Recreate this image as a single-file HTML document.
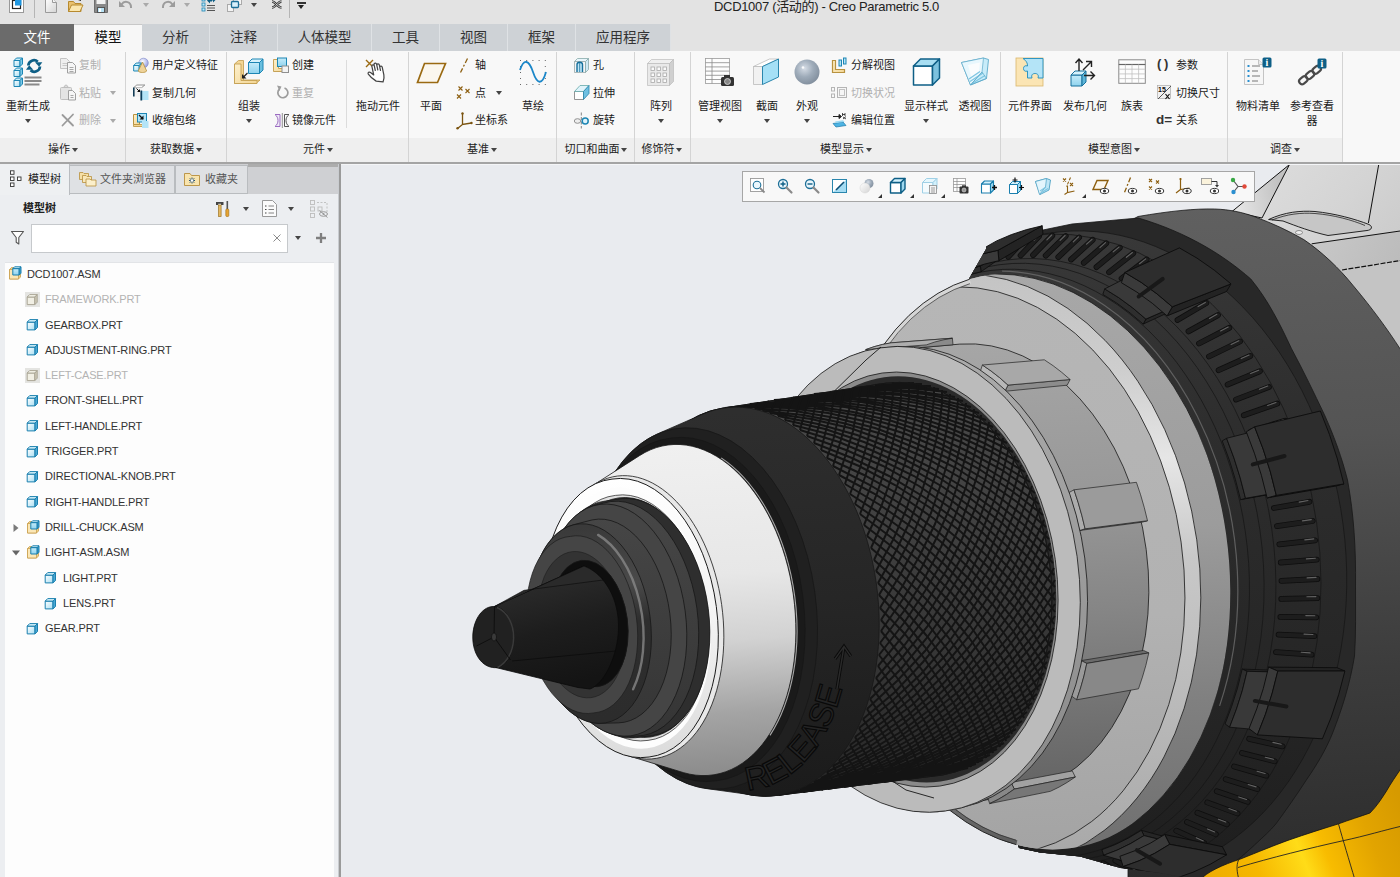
<!DOCTYPE html>
<html lang="zh-CN"><head><meta charset="utf-8"><title>DCD1007 - Creo Parametric 5.0</title>
<style>
*{box-sizing:border-box;margin:0;padding:0}
html,body{width:1400px;height:877px;overflow:hidden;background:#e3e3e3}
body{font-family:"Liberation Sans","Noto Sans CJK SC",sans-serif;font-size:11px;color:#1a1a1a;position:relative}
.abs{position:absolute}
.t{position:absolute;white-space:nowrap;line-height:16px;height:16px}
.tc{position:absolute;white-space:nowrap;line-height:16px;height:16px;transform:translateX(-50%)}
.dis{color:#b0b0b0}
.tab{position:absolute;top:24px;height:27px;background:#ced2d6;font-size:13.5px;line-height:27.5px;text-align:center;color:#333;border-right:1px solid #dfe2e5}
.gsep{position:absolute;top:52px;height:110px;width:1px;background:#d4d4d4}
.glab{position:absolute;top:141px;line-height:16px;white-space:nowrap;transform:translateX(-50%);color:#222}
.arr{position:absolute;width:0;height:0;border-left:3.5px solid transparent;border-right:3.5px solid transparent;border-top:4px solid #444}
.arrg{border-top-color:#aaa}
.ico{position:absolute}
.tr{position:absolute;white-space:nowrap;line-height:16px;height:16px;font-size:11px;color:#333;letter-spacing:-0.15px}
</style></head><body>
<svg width="0" height="0" style="position:absolute"><defs>
<linearGradient id="gb" x1="0" y1="0" x2="1" y2="1"><stop offset="0" stop-color="#ffffff"/><stop offset="1" stop-color="#a8def2"/></linearGradient>
<linearGradient id="gb2" x1="0" y1="0" x2="0" y2="1"><stop offset="0" stop-color="#c6ecfa"/><stop offset="1" stop-color="#8fd3ee"/></linearGradient>
<linearGradient id="gy" x1="0" y1="0" x2="1" y2="1"><stop offset="0" stop-color="#fdf0cc"/><stop offset="1" stop-color="#f3d695"/></linearGradient>
<linearGradient id="gg" x1="0" y1="0" x2="1" y2="1"><stop offset="0" stop-color="#ffffff"/><stop offset="1" stop-color="#d4d4d4"/></linearGradient>
<radialGradient id="gsph" cx="0.4" cy="0.35" r="0.7"><stop offset="0" stop-color="#d6dde6"/><stop offset="0.5" stop-color="#9eabb9"/><stop offset="1" stop-color="#7f8c9b"/></radialGradient>
<radialGradient id="gsph2" cx="0.4" cy="0.35" r="0.7"><stop offset="0" stop-color="#ffffff"/><stop offset="0.6" stop-color="#b9c0ee"/><stop offset="1" stop-color="#8d95d8"/></radialGradient>
</defs></svg>
<div class="abs" id="view" style="left:341px;top:164px;width:1059px;height:713px;background:#e9ebef;overflow:hidden;border-top:1px solid #f4f5f7"><svg class="abs" style="left:0;top:0" width="1059" height="712" viewBox="341 165 1059 712"><defs><linearGradient id="d1" gradientUnits="userSpaceOnUse" x1="1240" y1="165" x2="1400" y2="300"><stop offset="0" stop-color="#dedede"/><stop offset="0.5" stop-color="#d4d4d4"/><stop offset="1" stop-color="#c6c6c6"/></linearGradient><linearGradient id="d2" gradientUnits="userSpaceOnUse" x1="1235" y1="200" x2="1280" y2="190"><stop offset="0" stop-color="#e6e6e6"/><stop offset="1" stop-color="#c2c2c2"/></linearGradient><linearGradient id="d3" gradientUnits="userSpaceOnUse" x1="1300" y1="240" x2="1400" y2="300"><stop offset="0" stop-color="#c9c9c9"/><stop offset="1" stop-color="#b9b9b9"/></linearGradient><linearGradient id="d4" gradientUnits="userSpaceOnUse" x1="1113.8" y1="210.9" x2="1148.2" y2="880.6"><stop offset="0" stop-color="#606060"/><stop offset="0.35" stop-color="#545454"/><stop offset="0.7" stop-color="#3c3c3c"/><stop offset="1" stop-color="#2c2c2c"/></linearGradient><clipPath id="rc"><path d="M968 292L969.5 278L986 249L990 160L1400 160L1400 880L1200 880L1157 872.5L1120 868L1080 856.5L1040 852.5L1019 848L968 700Z"/></clipPath><linearGradient id="d5" gradientUnits="userSpaceOnUse" x1="1011.3" y1="240.8" x2="1045.8" y2="879.5"><stop offset="0" stop-color="#383838"/><stop offset="0.3" stop-color="#2e2e2e"/><stop offset="0.7" stop-color="#262626"/><stop offset="1" stop-color="#1e1e1e"/></linearGradient><clipPath id="cc"><ellipse cx="1030.8" cy="561.4" rx="289.6" ry="197.2" transform="rotate(-98.12 1030.8 561.4)"/></clipPath><linearGradient id="d6" gradientUnits="userSpaceOnUse" x1="979.3" y1="274.8" x2="1011.2" y2="855.6"><stop offset="0" stop-color="#a8a8a8"/><stop offset="0.45" stop-color="#9c9c9c"/><stop offset="0.75" stop-color="#808080"/><stop offset="1" stop-color="#707070"/></linearGradient><linearGradient id="d7" gradientUnits="userSpaceOnUse" x1="947.4" y1="275.3" x2="980.1" y2="863.8"><stop offset="0" stop-color="#c4c4c4"/><stop offset="0.18" stop-color="#cecece"/><stop offset="0.33" stop-color="#e6e6e6"/><stop offset="0.5" stop-color="#c8c8c8"/><stop offset="0.75" stop-color="#bababa"/><stop offset="1" stop-color="#a8a8a8"/></linearGradient><linearGradient id="d8" gradientUnits="userSpaceOnUse" x1="952.2" y1="290.2" x2="983.2" y2="848.2"><stop offset="0" stop-color="#b6b6b6"/><stop offset="0.6" stop-color="#b2b2b2"/><stop offset="1" stop-color="#a4a4a4"/></linearGradient><linearGradient id="d9" gradientUnits="userSpaceOnUse" x1="900" y1="280" x2="900" y2="850"><stop offset="0" stop-color="#d6d6d6"/><stop offset="0.55" stop-color="#cacaca"/><stop offset="0.8" stop-color="#9c9c9c"/><stop offset="0.92" stop-color="#6e6e6e"/><stop offset="1" stop-color="#5a5a5a"/></linearGradient><linearGradient id="d10" gradientUnits="userSpaceOnUse" x1="955.3" y1="345.9" x2="980.2" y2="793.9"><stop offset="0" stop-color="#a6a6a6"/><stop offset="0.35" stop-color="#989898"/><stop offset="0.6" stop-color="#868686"/><stop offset="1" stop-color="#646464"/></linearGradient><linearGradient id="d11" gradientUnits="userSpaceOnUse" x1="890.2" y1="346.6" x2="916.7" y2="810.8"><stop offset="0" stop-color="#ababab"/><stop offset="0.5" stop-color="#9c9c9c"/><stop offset="1" stop-color="#888"/></linearGradient><linearGradient id="d12" gradientUnits="userSpaceOnUse" x1="896" y1="382" x2="918.5" y2="775.1"><stop offset="0" stop-color="#4a4a4a"/><stop offset="0.35" stop-color="#414141"/><stop offset="0.7" stop-color="#363636"/><stop offset="1" stop-color="#282828"/></linearGradient><linearGradient id="d13" gradientUnits="userSpaceOnUse" x1="709.9" y1="413.1" x2="733.5" y2="795.5"><stop offset="0" stop-color="#2e2e2e"/><stop offset="0.5" stop-color="#262626"/><stop offset="1" stop-color="#1b1b1b"/></linearGradient><linearGradient id="d14" gradientUnits="userSpaceOnUse" x1="674" y1="444.4" x2="694.7" y2="775"><stop offset="0" stop-color="#f0f0f0"/><stop offset="0.4" stop-color="#e7e7e7"/><stop offset="0.6" stop-color="#d2d2d2"/><stop offset="0.82" stop-color="#a4a4a4"/><stop offset="1" stop-color="#8c8c8c"/></linearGradient><linearGradient id="d15" gradientUnits="userSpaceOnUse" x1="617.7" y1="478.7" x2="635.6" y2="757.1"><stop offset="0" stop-color="#ffffff"/><stop offset="0.5" stop-color="#f4f4f4"/><stop offset="1" stop-color="#dcdcdc"/></linearGradient><linearGradient id="d16" gradientUnits="userSpaceOnUse" x1="604.4" y1="504.1" x2="619.4" y2="736"><stop offset="0" stop-color="#474747"/><stop offset="0.5" stop-color="#3e3e3e"/><stop offset="1" stop-color="#353535"/></linearGradient><linearGradient id="d17" gradientUnits="userSpaceOnUse" x1="577.1" y1="528.1" x2="589.6" y2="720.2"><stop offset="0" stop-color="#3a3a3a"/><stop offset="0.3" stop-color="#4a4a4a"/><stop offset="0.5" stop-color="#2e2e2e"/><stop offset="1" stop-color="#2c2c2c"/></linearGradient><linearGradient id="d18" gradientUnits="userSpaceOnUse" x1="520" y1="590" x2="545" y2="690"><stop offset="0" stop-color="#2a2a2a"/><stop offset="0.45" stop-color="#1d1d1d"/><stop offset="1" stop-color="#141414"/></linearGradient><linearGradient id="d19" gradientUnits="userSpaceOnUse" x1="1205" y1="880" x2="1400" y2="800"><stop offset="0" stop-color="#eeac00"/><stop offset="0.25" stop-color="#f6b800"/><stop offset="0.47" stop-color="#ffdc18"/><stop offset="0.58" stop-color="#f8bc00"/><stop offset="0.8" stop-color="#e2a400"/><stop offset="1" stop-color="#d69a00"/></linearGradient></defs><path d="M1225 218L1289.5 165L1410 165L1410 420L1225 420Z" fill="url(#d1)"/><path d="M1232 211.5L1289.5 164.5L1262 218Z" fill="url(#d2)" stroke="#111" stroke-width="1"/><path d="M1311.7 243.8L1400 231L1400 420L1311 420Z" fill="url(#d3)"/><path d="M1342 270L1400 260.6L1400 420L1342 420Z" fill="#c4c4c4"/><path d="M1311.7 243.8L1400 231" fill="none" stroke="#111" stroke-width="1"/><path d="M1342 270L1400 260.6" fill="none" stroke="#111" stroke-width="1.2" stroke-dasharray="5 1.5"/><path d="M1378.8 164L1368.4 223" fill="none" stroke="#111" stroke-width="1"/><path d="M1268.6 219.5C1285 212 1300 210.5 1315 211.5C1335 213.5 1355 219 1369 224.5C1373 226.5 1372 230 1367 230.5L1328 235.5C1312 232 1296 226 1283 221Z" fill="#c6c6c6" stroke="#111" stroke-width="0.9"/><path d="M1272 220C1287 214 1301 212.5 1315 213.5C1334 215 1352 220 1365 225.5" fill="none" stroke="#111" stroke-width="0.7"/><path d="M1295.5 232.5a3.5 2 0 1 0 7 0a3.5 2 0 1 0 -7 0" fill="#ececec" stroke="#555" stroke-width="0.6"/><path d="M1128 222L1138 216.5C1170 211 1195 208.5 1214.5 209C1230 209.5 1243 212.5 1254 216.5C1272 223 1289 231 1303.8 239.6C1322 252 1339 268 1353.4 285.9C1372 308 1388 330 1400 348.7L1410 365L1410 890L1128 890Z" fill="url(#d4)" stroke="#161616" stroke-width="0.8"/><g clip-path="url(#rc)"><path d="M960 300L969.8 278L986.3 249.5L1026 233.5L1072 224L1138.4 218C1165 226 1185 235 1204.5 246C1222 256 1237 267 1250.8 279C1268 300 1280 324 1291.5 348.7C1304 372 1314 393 1324.5 414.9C1334 436 1342 458 1347.5 480C1354 515 1356 550 1355.5 586C1355.5 610 1356 634 1354.5 656C1350 684 1342 709 1333 732C1326 750 1316 766 1306 780.5C1296 796 1286 810 1276 823.8C1270 831 1263 837 1257 842.7C1247 852 1236 862 1222 872L1200 885L1150 885L1150 400Z" fill="#282828" stroke="#161616" stroke-width="0.8"/><path d="M1059.9 231.8A324.9 246.4 -98.3 0 1 1145.5 875.8L1118.1 879.8A325 243.7 -98.2 1 1 1032.6 235.4Z" fill="url(#d5)" stroke="#161616" stroke-width="0.8"/><path d="M890.7 325A325 243.7 -98.2 1 1 963.8 832.7L946.7 819.3A304.1 225.5 -98.2 0 1 878.1 342.2Z" fill="url(#d5)" stroke="#161616" stroke-width="0.8"/><path d="M930.1 290.3A304.1 225.5 -98.2 1 1 1011.7 854.6L1004.5 852.1A300.3 221.9 -98.1 0 1 923.9 294.6Z" fill="url(#d5)" stroke="#161616" stroke-width="0.8"/><path d="M923.9 294.6A300.3 221.9 -98.1 1 1 1004.5 852.1L995.6 849.2A295.8 217.7 -98.1 0 1 916.3 299.7Z" fill="url(#d5)" stroke="#161616" stroke-width="0.8"/><path d="M956.8 278.6A295.8 217.7 -98.1 1 1 1040.7 857.9L1026.1 857.1A293.1 214.2 -98.1 0 1 943.1 283.2Z" fill="url(#d5)" stroke="#161616" stroke-width="0.8"/><path d="M1002.1 271.2A295.2 216.2 -98.1 0 1 1219.6 705.9" fill="none" stroke="#6c6c6c" stroke-width="1.2" opacity="0.8"/><path d="M913.4 302L925.3 286.1M923.1 293.9L935.6 277.5M933.2 286.5L946.3 269.6M943.7 279.8L957.4 262.5M954.5 273.9L968.8 256.1M965.7 268.7L980.7 250.5M1008.3 256.8L1025.9 237.6M1020.6 255.5L1039 236.2M1033.1 255.1L1052.3 235.6M1045.7 255.6L1065.7 236.1M1058.3 257.1L1079.1 237.5M1071.1 259.5L1092.7 239.9M1083.8 262.8L1106.3 243.3M1096.5 267.1L1119.8 247.7M1109.1 272.3L1133.3 253.2M1121.6 278.5L1146.6 259.6M1177.5 320L1206.3 303.1M1188.5 331.4L1218 315.1M1199 343.5L1229.3 327.9M1209 356.5L1240 341.5M1218.6 370.2L1250.3 356M1227.6 384.6L1259.9 371.2M1236 399.6L1268.9 387.1M1243.8 415.2L1277.3 403.6M1251 431.4L1284.9 420.7M1273.9 508L1309.4 501.8M1277 526.1L1312.7 521M1279.3 544.3L1315.2 540.3M1280.8 562.5L1316.7 559.6M1281.5 580.8L1317.4 579M1281.3 598.9L1317.3 598.2M1280.4 616.9L1316.2 617.3M1278.6 634.7L1314.3 636.1M1276 652.2L1311.5 654.7M1249.2 738.8L1282.5 746.3M1242 753L1274.7 761.3M1234.1 766.5L1266.3 775.6M1225.7 779.2L1257.3 789M1216.8 791.2L1247.7 801.7M1207.3 802.4L1237.5 813.4M1197.4 812.7L1226.9 824.3M1187 822.1L1215.8 834.2M1176.3 830.7L1204.3 843.2M1115.4 860.5L1139.3 874.3M1103.2 863.3L1126.3 877.2M1090.9 865.2L1113.2 879.1M1078.5 866.2L1100 880.1M1066.2 866.3L1086.8 880.1M1053.8 865.5L1073.7 879.2M1041.5 863.8L1060.7 877.3M1029.3 861.3L1047.7 874.6M1017.3 857.9L1034.9 871" fill="none" stroke="#0e0e0e" stroke-width="5.8" stroke-linecap="round"/><path d="M913.4 302L925.3 286.1M923.1 293.9L935.6 277.5M933.2 286.5L946.3 269.6M943.7 279.8L957.4 262.5M954.5 273.9L968.8 256.1M965.7 268.7L980.7 250.5M1008.3 256.8L1025.9 237.6M1020.6 255.5L1039 236.2M1033.1 255.1L1052.3 235.6M1045.7 255.6L1065.7 236.1M1058.3 257.1L1079.1 237.5M1071.1 259.5L1092.7 239.9M1083.8 262.8L1106.3 243.3M1096.5 267.1L1119.8 247.7M1109.1 272.3L1133.3 253.2M1121.6 278.5L1146.6 259.6M1177.5 320L1206.3 303.1M1188.5 331.4L1218 315.1M1199 343.5L1229.3 327.9M1209 356.5L1240 341.5M1218.6 370.2L1250.3 356M1227.6 384.6L1259.9 371.2M1236 399.6L1268.9 387.1M1243.8 415.2L1277.3 403.6M1251 431.4L1284.9 420.7M1273.9 508L1309.4 501.8M1277 526.1L1312.7 521M1279.3 544.3L1315.2 540.3M1280.8 562.5L1316.7 559.6M1281.5 580.8L1317.4 579M1281.3 598.9L1317.3 598.2M1280.4 616.9L1316.2 617.3M1278.6 634.7L1314.3 636.1M1276 652.2L1311.5 654.7M1249.2 738.8L1282.5 746.3M1242 753L1274.7 761.3M1234.1 766.5L1266.3 775.6M1225.7 779.2L1257.3 789M1216.8 791.2L1247.7 801.7M1207.3 802.4L1237.5 813.4M1197.4 812.7L1226.9 824.3M1187 822.1L1215.8 834.2M1176.3 830.7L1204.3 843.2M1115.4 860.5L1139.3 874.3M1103.2 863.3L1126.3 877.2M1090.9 865.2L1113.2 879.1M1078.5 866.2L1100 880.1M1066.2 866.3L1086.8 880.1M1053.8 865.5L1073.7 879.2M1041.5 863.8L1060.7 877.3M1029.3 861.3L1047.7 874.6M1017.3 857.9L1034.9 871" fill="none" stroke="#1d1d1d" stroke-width="4.3" stroke-linecap="round"/><path d="M921.7 290.9L924.7 286.9M931.8 282.4L934.9 278.3M942.3 274.7L945.6 270.4M953.3 267.7L956.7 263.3M964.5 261.4L968.1 257M976.2 256L979.9 251.4M1020.6 243.4L1025 238.6M1033.5 242L1038.1 237.1M1046.5 241.5L1051.3 236.6M1059.7 241.9L1064.7 237.1M1072.9 243.4L1078.1 238.5M1086.2 245.8L1091.6 240.9M1099.5 249.2L1105.1 244.3M1112.8 253.5L1118.6 248.7M1126 258.9L1132 254.1M1139.1 265.3L1145.3 260.5M1197.7 308.2L1204.9 304M1209.1 320L1216.5 315.9M1220.2 332.6L1227.8 328.7M1230.7 346L1238.5 342.3M1240.8 360.2L1248.7 356.7M1250.2 375.2L1258.3 371.8M1259 390.8L1267.3 387.7M1267.2 407.1L1275.6 404.2M1274.7 424L1283.2 421.3M1298.8 503.7L1307.6 502.1M1302 522.5L1310.9 521.2M1304.4 541.5L1313.4 540.5M1306 560.5L1315 559.8M1306.7 579.5L1315.6 579M1306.5 598.4L1315.5 598.2M1305.4 617.2L1314.4 617.3M1303.6 635.7L1312.5 636.1M1300.8 653.9L1309.7 654.5M1272.5 744L1280.8 745.9M1264.9 758.8L1273.1 760.9M1256.7 772.8L1264.7 775.1M1247.8 786.1L1255.7 788.5M1238.4 798.5L1246.1 801.1M1228.5 810.1L1236 812.9M1218 820.8L1225.4 823.7M1207.1 830.6L1214.3 833.6M1195.9 839.4L1202.9 842.5M1132.1 870.1L1138.1 873.6M1119.4 873L1125.1 876.5M1106.5 874.9L1112 878.4M1093.6 875.9L1098.9 879.4M1080.6 875.9L1085.8 879.4M1067.8 875.1L1072.7 878.5M1054.9 873.3L1059.7 876.6M1042.2 870.6L1046.8 873.9M1029.6 867.1L1034 870.3" fill="none" stroke="#626262" stroke-width="1.1" stroke-linecap="round" transform="translate(0.4,-1.6)"/><path d="M981 271.8L998.5 259.4L998 254.6L980.4 266.1Z" fill="#262626" stroke="#0c0c0c" stroke-width="0.8" stroke-linejoin="round"/><path d="M943.2 284.1L955.5 279L968.1 274.9L981 271.8L980.4 266.1L967.3 269.3L954.4 273.5L942 278.8Z" fill="#2e2e2e" stroke="#0c0c0c" stroke-width="0.8" stroke-linejoin="round"/><path d="M942 278.8L954.4 273.5L967.3 269.3L980.4 266.1L998 254.6L984.3 258L971 262.4L958.1 267.9Z" fill="#393939" stroke="#0c0c0c" stroke-width="0.8" stroke-linejoin="round"/><path d="M998.9 260.7L1043 234.4L1042.2 225.8L997.9 250.3Z" fill="#232323" stroke="#0c0c0c" stroke-width="0.9" stroke-linejoin="round"/><path d="M957.9 273.9L971.2 268.4L984.9 264L998.9 260.7L997.9 250.3L983.4 253.7L969.3 258.3L955.6 264.2Z" fill="#3a3a3a" stroke="#0c0c0c" stroke-width="0.9" stroke-linejoin="round"/><path d="M955.6 264.2L969.3 258.3L983.4 253.7L997.9 250.3L1042.2 225.8L1026.6 229.6L1011.4 234.6L996.6 240.9Z" fill="#2d2d2d" stroke="#0c0c0c" stroke-width="0.9" stroke-linejoin="round"/><path d="M969.3 265.4L982.6 247.4" fill="none" stroke="#181818" stroke-width="4" stroke-linecap="round"/><path d="M1143.2 324.1L1167.7 312.8L1170.1 308.5L1145.9 319.1Z" fill="#262626" stroke="#0c0c0c" stroke-width="0.8" stroke-linejoin="round"/><path d="M1102.8 294.4L1116.6 303L1130.1 313L1143.2 324.1L1145.9 319.1L1132.6 307.8L1118.8 297.7L1104.7 288.9Z" fill="#2e2e2e" stroke="#0c0c0c" stroke-width="0.8" stroke-linejoin="round"/><path d="M1104.7 288.9L1118.8 297.7L1132.6 307.8L1145.9 319.1L1170.1 308.5L1156.2 296.9L1141.8 286.5L1127.1 277.5Z" fill="#393939" stroke="#0c0c0c" stroke-width="0.8" stroke-linejoin="round"/><path d="M1167.1 315.9L1226.5 291.5L1231 283.9L1172.3 306.8Z" fill="#232323" stroke="#0c0c0c" stroke-width="0.9" stroke-linejoin="round"/><path d="M1121.4 282.7L1137 292.2L1152.3 303.3L1167.1 315.9L1172.3 306.8L1156.9 293.8L1141.1 282.3L1124.8 272.5Z" fill="#3a3a3a" stroke="#0c0c0c" stroke-width="0.9" stroke-linejoin="round"/><path d="M1124.8 272.5L1141.1 282.3L1156.9 293.8L1172.3 306.8L1231 283.9L1214.3 270.2L1197.1 258.2L1179.4 247.9Z" fill="#2d2d2d" stroke="#0c0c0c" stroke-width="0.9" stroke-linejoin="round"/><path d="M1138.7 296.5L1162.7 278.9" fill="none" stroke="#181818" stroke-width="4" stroke-linecap="round"/><path d="M1240.6 499.7L1269.5 494.4L1273.7 493.3L1245.5 498.3Z" fill="#262626" stroke="#0c0c0c" stroke-width="0.8" stroke-linejoin="round"/><path d="M1222.2 440.9L1229.3 460L1235.4 479.6L1240.6 499.7L1245.5 498.3L1240.2 477.8L1233.9 457.8L1226.6 438.3Z" fill="#2e2e2e" stroke="#0c0c0c" stroke-width="0.8" stroke-linejoin="round"/><path d="M1226.6 438.3L1233.9 457.8L1240.2 477.8L1245.5 498.3L1273.7 493.3L1268.3 472.1L1261.7 451.4L1254.1 431.3Z" fill="#393939" stroke="#0c0c0c" stroke-width="0.8" stroke-linejoin="round"/><path d="M1267.1 497.9L1336 486L1343.8 483.9L1276.3 495.4Z" fill="#232323" stroke="#0c0c0c" stroke-width="0.9" stroke-linejoin="round"/><path d="M1246.3 431.8L1254.4 453.2L1261.4 475.3L1267.1 497.9L1276.3 495.4L1270.4 471.9L1263.1 449L1254.6 426.8Z" fill="#3a3a3a" stroke="#0c0c0c" stroke-width="0.9" stroke-linejoin="round"/><path d="M1254.6 426.8L1263.1 449L1270.4 471.9L1276.3 495.4L1343.8 483.9L1337.4 459L1329.5 434.6L1320.3 411Z" fill="#2d2d2d" stroke="#0c0c0c" stroke-width="0.9" stroke-linejoin="round"/><path d="M1252.8 464.4L1284.5 456" fill="none" stroke="#181818" stroke-width="4" stroke-linecap="round"/><path d="M1242.2 669.1L1271 670.1L1275.2 672L1247.1 671.3Z" fill="#262626" stroke="#0c0c0c" stroke-width="0.8" stroke-linejoin="round"/><path d="M1242.2 669.1L1237.5 688.1L1231.7 706.3L1225.1 723.9L1229.6 727.2L1236.4 709.3L1242.3 690.7L1247.1 671.3Z" fill="#2e2e2e" stroke="#0c0c0c" stroke-width="0.8" stroke-linejoin="round"/><path d="M1247.1 671.3L1242.3 690.7L1236.4 709.3L1229.6 727.2L1256.8 729.7L1264 711.2L1270.1 692L1275.2 672Z" fill="#393939" stroke="#0c0c0c" stroke-width="0.8" stroke-linejoin="round"/><path d="M1268.6 667.1L1337 667.7L1344.9 671L1277.8 671.1Z" fill="#232323" stroke="#0c0c0c" stroke-width="0.9" stroke-linejoin="round"/><path d="M1268.6 667.1L1263.3 688.5L1256.7 709L1249 728.6L1257.4 734.9L1265.4 714.5L1272.2 693.2L1277.8 671.1Z" fill="#3a3a3a" stroke="#0c0c0c" stroke-width="0.9" stroke-linejoin="round"/><path d="M1277.8 671.1L1272.2 693.2L1265.4 714.5L1257.4 734.9L1322.4 738.8L1331.2 717.2L1338.7 694.6L1344.9 671Z" fill="#2d2d2d" stroke="#0c0c0c" stroke-width="0.9" stroke-linejoin="round"/><path d="M1254.9 700.9L1286.4 706.5" fill="none" stroke="#181818" stroke-width="4" stroke-linecap="round"/><path d="M1141.4 830.3L1165.2 836.8L1167.5 841.4L1144 835.6Z" fill="#262626" stroke="#0c0c0c" stroke-width="0.8" stroke-linejoin="round"/><path d="M1141.4 830.3L1128.5 838L1115.4 844.5L1101.9 849.7L1103.7 855.3L1117.4 850L1130.9 843.4L1144 835.6Z" fill="#2e2e2e" stroke="#0c0c0c" stroke-width="0.8" stroke-linejoin="round"/><path d="M1144 835.6L1130.9 843.4L1117.4 850L1103.7 855.3L1125.5 861.6L1139.8 856.2L1153.8 849.4L1167.5 841.4Z" fill="#393939" stroke="#0c0c0c" stroke-width="0.8" stroke-linejoin="round"/><path d="M1164.7 834.5L1222.4 846.7L1226.6 854.8L1169.7 844.3Z" fill="#232323" stroke="#0c0c0c" stroke-width="0.9" stroke-linejoin="round"/><path d="M1164.7 834.5L1150.2 843.3L1135.2 850.6L1119.9 856.3L1123.2 866.6L1139.1 860.8L1154.6 853.4L1169.7 844.3Z" fill="#3a3a3a" stroke="#0c0c0c" stroke-width="0.9" stroke-linejoin="round"/><path d="M1169.7 844.3L1154.6 853.4L1139.1 860.8L1123.2 866.6L1176.1 878.2L1193.3 872.1L1210.2 864.3L1226.6 854.8Z" fill="#2d2d2d" stroke="#0c0c0c" stroke-width="0.9" stroke-linejoin="round"/><path d="M1136.9 850.2L1160.1 863.7" fill="none" stroke="#181818" stroke-width="4" stroke-linecap="round"/></g><g clip-path="url(#cc)"><path d="M994.3 273.9A293.1 214.2 -98.1 0 1 1078.3 851.2L1047.5 859.8A297.3 214.3 -98 1 1 962.5 274.1Z" fill="url(#d6)" stroke="#161616" stroke-width="0.8"/><path d="M1026.1 864.4A297.3 214.3 -98 1 1 942.9 275.6A297.3 214.3 -98 1 1 1026.1 864.4Z" fill="url(#d7)" stroke="#161616" stroke-width="0.8"/><path d="M1016.2 853.5A285.3 205 -98 1 1 936.6 288.5A285.3 205 -98 1 1 1016.2 853.5Z" fill="url(#d8)" stroke="#161616" stroke-width="0.8"/><path d="M1016.3 844.7A289.6 197.2 -98.1 0 1 969.7 279.2" fill="none" stroke="url(#d9)" stroke-width="9"/><path d="M1016 840.2A285 192.3 -98.1 0 1 969.9 283.7" fill="none" stroke="#2a2a2a" stroke-width="0.7"/></g><path d="M1016.3 844.7A289.6 197.2 -98.1 0 1 969.7 279.2" fill="none" stroke="#1c1c1c" stroke-width="0.9"/><path d="M959.8 344.1A226.9 163.8 -98 0 1 1019.1 793.7L956.3 805.5A229.9 161.3 -97.9 1 1 896.4 349.8Z" fill="url(#d10)" stroke="#161616" stroke-width="0.8"/><path d="M892.1 350L953 344.8L952.4 338.2L891.5 342.8Z" fill="#8a8a8a" stroke="#222" stroke-width="0.7" stroke-linejoin="round"/><path d="M867.1 356.5L875.2 353.7L883.6 351.5L892.1 350L891.5 342.8L882.7 344.4L874.1 346.7L865.7 349.6Z" fill="#bcbcbc" stroke="#222" stroke-width="0.7" stroke-linejoin="round"/><path d="M865.7 349.6L874.1 346.7L882.7 344.4L891.5 342.8L952.4 338.2L943.6 339.8L934.8 342L926.3 344.9Z" fill="#adadad" stroke="#222" stroke-width="0.7" stroke-linejoin="round"/><path d="M1004.9 391.3L1067.2 385.2L1070.1 379.5L1008 385.1Z" fill="#8c8c8c" stroke="#222" stroke-width="0.7" stroke-linejoin="round"/><path d="M980.2 371.7L988.6 377.6L996.9 384.1L1004.9 391.3L1008 385.1L999.7 377.7L991.1 371L982.4 365Z" fill="#b8b8b8" stroke="#222" stroke-width="0.7" stroke-linejoin="round"/><path d="M982.4 365L991.1 371L999.7 377.7L1008 385.1L1070.1 379.5L1061.7 372.3L1053.1 365.7L1044.3 359.8Z" fill="#a8a8a8" stroke="#222" stroke-width="0.7" stroke-linejoin="round"/><path d="M1079.5 530.5L1142.2 522.2L1147.5 520.7L1085.1 528.8Z" fill="#7c7c7c" stroke="#222" stroke-width="0.7" stroke-linejoin="round"/><path d="M1068.7 492.7L1072.8 505.1L1076.4 517.7L1079.5 530.5L1085.1 528.8L1081.9 515.6L1078.2 502.6L1074 489.8Z" fill="#acacac" stroke="#222" stroke-width="0.7" stroke-linejoin="round"/><path d="M1074 489.8L1078.2 502.6L1081.9 515.6L1085.1 528.8L1147.5 520.7L1144.3 507.7L1140.6 494.8L1136.4 482.3Z" fill="#9b9b9b" stroke="#222" stroke-width="0.7" stroke-linejoin="round"/><path d="M1081.1 660.6L1143.5 650.4L1148.8 652.9L1086.8 663.4Z" fill="#6a6a6a" stroke="#222" stroke-width="0.7" stroke-linejoin="round"/><path d="M1081.1 660.6L1078.4 672.7L1075.1 684.5L1071.4 695.9L1076.7 699.8L1080.6 688L1084 675.9L1086.8 663.4Z" fill="#9a9a9a" stroke="#222" stroke-width="0.7" stroke-linejoin="round"/><path d="M1086.8 663.4L1084 675.9L1080.6 688L1076.7 699.8L1138.5 688.8L1142.4 677.2L1145.9 665.2L1148.8 652.9Z" fill="#888888" stroke="#222" stroke-width="0.7" stroke-linejoin="round"/><path d="M1011.1 782.5L1072.3 770.9L1075.3 777L1014.3 789.1Z" fill="#a2a2a2" stroke="#222" stroke-width="0.7" stroke-linejoin="round"/><path d="M1011.1 782.5L1003.4 787.9L995.4 792.6L987.3 796.6L989.7 803.6L998.1 799.5L1006.3 794.6L1014.3 789.1Z" fill="#888888" stroke="#222" stroke-width="0.7" stroke-linejoin="round"/><path d="M1014.3 789.1L1006.3 794.6L998.1 799.5L989.7 803.6L1050.4 791.3L1058.9 787.2L1067.2 782.4L1075.3 777Z" fill="#777777" stroke="#222" stroke-width="0.7" stroke-linejoin="round"/><path d="M902.6 346.5A232.8 163.4 -97.9 0 1 963.1 807.2L954.2 809.4A233.8 163.4 -97.9 1 1 893.5 346.8Z" fill="url(#d11)" stroke="#161616" stroke-width="0.8"/><path d="M945.7 810.9A233.8 163.4 -97.9 1 1 881.2 347.8A233.8 163.4 -97.9 1 1 945.7 810.9Z" fill="#bbbbbb" stroke="#161616" stroke-width="0.8"/><path d="M939.7 786.1A208.5 145.6 -97.9 1 1 882.2 373A208.5 145.6 -97.9 1 1 939.7 786.1Z" fill="#8a8a8a" stroke="#161616" stroke-width="0.8"/></g><path d="M834.5 391L866 360L881 347" fill="none" stroke="#161616" stroke-width="0.9"/><path d="M890 779.5L906 790L934 798" fill="none" stroke="#161616" stroke-width="0.9"/><path d="M940.5 781.5A204.1 142.6 -97.9 1 1 884.2 377.2A204.1 142.6 -97.9 1 1 940.5 781.5Z" fill="#2a2a2a"/><path d="M886.4 383.1A198 138.7 -97.9 0 1 942.7 775L777.2 795.4A195.5 126.4 -97.7 1 1 722.5 408.2Z" fill="url(#d12)" stroke="#161616" stroke-width="0.8"/><path d="M880 608L904 633L924 658L940 682L954 704L964 724L971 740L976 753L978 763M881 620L903 645L922 670L937 693L949 714L959 732L965 747L969 759L971 767M881 631L902 657L919 681L934 703L945 723L953 740L958 753L962 763L963 770M880 643L900 668L916 691L930 713L940 731L947 747L952 759L954 768L955 772M879 655L898 679L913 702L925 722L934 739L941 753L945 764L947 771L947 774M878 666L895 690L909 711L920 730L928 746L934 759L938 768L939 774M876 678L892 700L905 721L915 739L922 753L927 765L930 772L931 776M873 689L888 710L900 730L910 746L916 759L920 769L923 775L923 777M870 699L884 720L895 738L904 753L909 765L913 773L915 778M867 709L880 729L890 746L897 760L903 770L906 776L907 779M863 719L875 737L884 753L891 765L895 774L898 779M859 728L870 746L878 760L884 771L888 778L890 781M855 737L865 753L872 766L877 775L881 781M850 745L859 760L866 771L870 779L873 783M844 753L853 766L859 776L863 782L866 784M839 760L847 772L852 780L856 785M833 766L840 777L845 784L848 786M827 772L833 781L838 786M821 778L826 785L830 788M814 782L819 788L823 790M807 786L812 790M800 789L805 792M875 385L914 383M883 385L922 384M853 388L891 385L931 386M861 388L900 386L939 389M830 392L869 388L908 388L947 392M837 391L877 389L916 391L955 397M845 391L885 390L924 394L963 401M814 394L853 391L893 393L932 398L971 407M822 394L861 393L901 395L940 402L979 413M791 398L830 394L869 395L909 399L948 407L986 420M798 397L838 395L877 397L917 403L956 413L993 427M806 397L845 397L885 401L925 408L963 420L1000 435M774 400L814 398L853 399L893 405L932 414L970 427L1007 443M782 400L821 399L861 402L901 409L940 420L977 434L1013 452M750 404L789 401L829 401L869 406L908 414L947 427L984 443L1019 462M757 403L797 402L837 404L877 410L916 420L954 434L990 451L1025 472M725 408L765 404L805 404L845 407L884 415L923 427L961 442L996 461L1030 482M733 407L773 405L813 406L853 412L892 421L930 434L967 451L1002 470L1035 493M740 407L780 406L820 409L860 416L899 427L937 442L973 460L1007 481L1039 504M748 407L788 408L828 413L868 422L906 434L944 450L979 469L1012 491L1043 515M755 409L795 411L836 418L875 428L913 442L950 459L984 479L1017 502L1046 527M763 411L803 415L843 423L882 434L920 450L956 468L990 490L1021 514L1049 539M770 413L811 419L850 428L889 442L926 458L961 478L994 501L1024 525L1051 551M778 416L818 424L857 435L896 450L932 468L966 489L998 512L1027 537L1053 563M785 420L825 429L864 442L902 458L938 477L971 499L1002 523L1030 549L1054 575M793 425L832 435L871 450L908 467L943 487L975 510L1005 535L1032 561L1055 587M800 430L839 442L877 458L914 476L948 498L979 521L1008 547L1033 573L1055 600M807 436L846 450L883 466L919 486L952 509L983 533L1010 559L1034 585L1055 612M814 443L852 458L889 476L924 497L956 520L986 545L1012 571L1035 597L1054 624M821 450L859 466L895 485L929 507L960 531L988 557L1013 583L1035 610L1053 635M827 458L864 475L900 495L933 518L963 543L990 569L1014 595L1034 622L1051 647M833 466L870 485L904 506L936 530L965 555L991 581L1014 607L1033 633L1048 658M839 475L875 494L909 517L940 541L968 567L992 593L1013 619L1031 645L1046 669M845 484L880 505L913 528L942 553L969 579L993 605L1013 631L1029 656L1042 680M850 494L884 516L916 539L945 565L970 591L992 617L1011 643L1026 667L1038 690M855 504L888 527L919 551L947 577L971 603L992 629L1009 654L1023 678L1034 700M860 514L892 538L922 563L948 589L971 615L991 641L1007 666L1020 688L1029 709M864 525L895 549L924 575L949 601L971 627L989 653L1004 676L1015 698L1024 718M867 536L898 561L925 587L949 613L970 639L987 664L1000 687L1011 708L1018 726M871 548L900 573L926 599L949 625L968 651L984 675L997 697L1006 717L1012 734M874 560L902 585L927 611L948 637L966 662L981 685L992 707L1001 725L1006 741M876 571L903 597L927 623L947 649L964 673L977 696L988 716L995 733L1000 747M878 583L904 609L926 635L945 660L961 684L973 705L982 724L989 740L993 753M879 595L904 621L925 647L943 671L957 694L969 715L977 732L983 747L986 758" fill="none" stroke="#141414" stroke-width="2"/><path d="M880 608L900 575L917 543L931 513L941 484L949 458L954 434L957 414L958 398M881 620L902 587L920 555L935 524L946 494L955 467L961 442L964 421L966 403M881 631L903 599L922 567L938 535L951 505L960 477L967 451L972 428L974 409M880 643L904 611L924 579L941 547L955 516L966 487L973 460L979 436L981 415M879 655L904 623L925 591L944 559L959 528L970 498L979 470L985 444L989 422M878 666L904 635L926 603L946 571L962 539L975 509L985 480L992 453L996 430M876 678L903 647L927 615L947 583L965 551L979 520L990 490L998 463L1003 438M873 689L901 659L927 627L948 595L967 563L982 531L994 501L1003 472L1009 447M870 699L900 670L926 639L949 607L969 575L985 543L998 512L1008 483L1015 456M867 709L897 681L925 651L949 619L970 587L988 555L1002 523L1013 493L1021 465M863 719L895 692L923 662L949 631L971 599L990 567L1005 535L1018 504L1027 475M859 728L891 702L921 674L948 643L971 611L991 579L1008 547L1021 516L1032 486M855 737L888 712L918 684L946 655L971 623L992 591L1010 559L1025 527L1036 497M850 745L884 721L915 695L944 666L970 635L993 603L1012 571L1028 539L1040 508M844 753L879 730L912 705L942 677L969 647L993 616L1013 583L1030 551L1044 520M839 760L874 739L908 715L939 688L967 658L992 627L1014 596L1032 563L1047 531M833 766L869 747L903 724L935 698L965 670L991 639L1014 608L1034 575L1050 543M827 772L864 754L899 733L932 708L962 680L989 651L1013 620L1034 588L1052 555M821 778L858 761L894 741L927 717L959 691L987 662L1013 632L1035 600L1054 568M814 782L852 767L888 748L923 726L955 701L984 673L1011 643L1035 612L1055 580M807 786L845 773L882 755L918 735L951 711L981 684L1009 655L1034 624L1055 592M800 789L839 778L876 762L912 743L946 720L978 694L1007 666L1033 636L1055 604M793 792L832 782L870 768L907 750L941 729L974 704L1004 677L1031 647L1055 616M786 794L825 785L863 773L901 757L936 737L969 713L1000 687L1029 659L1054 628M779 795L818 788L857 777L894 763L930 744L965 722L996 697L1026 670L1052 640M811 791L850 781L888 768L924 751L959 731L992 707L1023 680L1050 651M803 792L842 785L881 773L918 758L954 738L987 716L1019 690L1047 662M835 787L874 777L912 763L948 746L982 725L1015 700L1044 673M828 789L867 781L905 768L942 752L977 733L1010 710L1041 684M859 784L898 773L935 758L971 740L1005 718L1037 694M852 786L891 777L928 764L965 747L1000 727L1032 703M844 787L883 780L921 769L958 753L994 735L1027 712M876 782L914 773L952 759L988 742L1022 721M868 784L907 776L945 764L981 748L1016 729M899 779L937 768L975 754L1010 736M892 781L930 772L968 760L1004 743M884 782L922 775L960 764L997 749M915 778L953 768L990 755M907 779L945 772L983 760M938 774L976 764M930 776L968 768M748 407L751 404M755 409L759 403M763 411L766 404L769 401M770 413L774 405L777 400M778 416L781 406L784 400M785 420L789 409L792 401L794 397M793 425L797 412L800 402L802 397M800 430L804 415L808 404L810 397L812 395M807 436L812 420L815 407L818 398L819 394M814 443L819 425L823 410L825 400L827 394M821 450L826 430L831 415L833 403L835 395L836 391M827 458L834 437L838 419L841 406L843 396L844 391M833 466L840 443L845 425L849 410L851 398L852 391L853 388M839 475L847 451L853 431L856 414L859 401L860 392L861 388M845 484L853 459L860 437L864 419L867 405L868 394L869 388L869 386M850 494L860 468L867 444L871 425L874 409L876 397L877 389L877 385M855 504L865 477L873 452L879 431L882 414L884 400L885 390L885 385M860 514L871 486L879 461L886 438L890 419L892 404L893 393L893 385L893 382M864 525L876 496L885 470L892 446L897 425L900 408L901 396L901 387L901 382M867 536L881 507L891 479L899 454L904 432L907 414L909 399L909 389L909 382M871 548L885 517L896 489L905 463L911 439L915 419L917 403L918 391L917 383M874 560L889 528L901 499L911 472L918 447L922 426L925 408L926 395L925 385M876 571L893 540L906 510L916 481L924 456L929 433L932 414L934 399L934 387M878 583L896 551L910 521L922 491L930 465L936 441L940 420L942 403L942 390M879 595L898 563L914 532L926 502L936 474L943 449L947 427L949 408L950 394" fill="none" stroke="#141414" stroke-width="2"/><path d="M886.4 383.1A198 138.7 -97.9 0 1 942.7 775L777.2 795.4A195.5 126.4 -97.7 1 1 722.5 408.2Z" fill="none" stroke="#161616" stroke-width="1"/><path d="M701.5 414.7A195.5 126.4 -97.7 1 1 755.1 795.3L706 788.5A181.7 114.5 -97.7 0 1 656.4 434.4Z" fill="url(#d13)" stroke="#161616" stroke-width="0.8"/><path d="M601.2 498.6A181.7 114.5 -97.7 1 1 635.2 742.6L631 737.3A172.9 108.6 -97.7 0 1 598.7 504.7Z" fill="#202020" stroke="#161616" stroke-width="0.8"/><path d="M716.7 780.8A172.9 108.6 -97.7 1 1 670.7 438.1A172.9 108.6 -97.7 1 1 716.7 780.8Z" fill="#1a1a1a" stroke="#161616" stroke-width="0.8"/><path id="relp" d="M741.4 789.8L746.7 789.8L752 789.4L757.3 788.6L762.5 787.5L767.7 785.9L772.8 784.1L777.8 781.8L782.8 779.2L787.6 776.2L792.4 772.8L797 769.1L801.5 765L805.8 760.6L810 755.8L814 750.7L817.9 745.3L821.5 739.6L825 733.6L828.3 727.2L831.4 720.6L834.2 713.8L836.8 706.7L839.2 699.3L841.4 691.8L843.3 684L845 676L846.4 667.9L847.5 659.6L848.4 651.2" fill="none"/><text font-family="Liberation Sans,sans-serif" font-size="33" fill="#242424" stroke="#090909" stroke-width="1.2" letter-spacing="-0.6"><textPath href="#relp" startOffset="6">RELEASE</textPath></text><path d="M836.9 689.3L844 646.4M835.1 658.8L844 646.4L850.7 656.2" fill="none" stroke="#0b0b0b" stroke-width="3.2"/><path d="M836.9 689.3L844 646.4M835.1 658.8L844 646.4L850.7 656.2" fill="none" stroke="#2a2a2a" stroke-width="1.4"/><path d="M639.4 455.7A166.5 104.4 -97.7 1 1 683.7 772.7L631.5 756.7A142.5 86.8 -97.6 0 1 593.7 484.9Z" fill="url(#d14)" stroke="#161616" stroke-width="0.8"/><path d="M721.2 457.9A167.1 104.8 -97.7 0 1 770 735.4" fill="none" stroke="#a8a8a8" stroke-width="1.1"/><path d="M593.7 484.9A142.5 86.8 -97.6 1 1 631.5 756.7L626.6 755.2A140.2 85.2 -97.6 0 1 589.4 487.7Z" fill="#e8e8e8" stroke="#161616" stroke-width="0.8"/><path d="M649.1 757A140.2 85.2 -97.6 1 1 612 479.1A140.2 85.2 -97.6 1 1 649.1 757Z" fill="url(#d15)" stroke="#1c1c1c" stroke-width="1"/><path d="M647.4 748.3A131.3 79.8 -97.6 1 1 612.7 488A131.3 79.8 -97.6 1 1 647.4 748.3Z" fill="#fdfdfd"/><path d="M648 740.4A123.6 75.2 -97.6 1 1 615.3 495.4A123.6 75.2 -97.6 1 1 648 740.4Z" fill="#e0e0e0" stroke="#333" stroke-width="0.8"/><path d="M650.5 737A120.6 73.4 -97.6 1 1 618.6 497.9A120.6 73.4 -97.6 1 1 650.5 737Z" fill="#3a3a3a" stroke="#161616" stroke-width="0.8"/><path d="M622 498.6A119.5 72.9 -97.6 0 1 652.5 735.6L635.8 737.7A119.3 72.1 -97.6 1 1 605.4 501Z" fill="#2e2e2e" stroke="#161616" stroke-width="0.8"/><path d="M603.5 503.1A118.1 71.6 -97.6 1 1 635.9 736.1L625.1 736.1A116.7 70.3 -97.6 0 1 593.1 505.9Z" fill="url(#d16)" stroke="#161616" stroke-width="0.8"/><path d="M630.8 735.8A116.7 70.3 -97.6 1 1 600 504.4A116.7 70.3 -97.6 1 1 630.8 735.8Z" fill="#454545" stroke="#161616" stroke-width="0.8"/><path d="M592.2 519.9A102.5 61.6 -97.6 1 1 618.3 722.9L599.5 723.3A100.4 59.7 -97.6 0 1 574 524.6Z" fill="url(#d16)" stroke="#161616" stroke-width="0.8"/><path d="M536.6 566.5A100.4 59.7 -97.6 1 1 552.5 691.4L548.3 685A89.1 52.7 -97.5 0 1 534.2 574Z" fill="url(#d17)" stroke="#161616" stroke-width="0.8"/><path d="M593.7 712.9A89.1 52.7 -97.5 1 1 570.3 536.4A89.1 52.7 -97.5 1 1 593.7 712.9Z" fill="#454545" stroke="#1c1c1c" stroke-width="0.7"/><path d="M598.1 534.9A95.7 56.8 -97.5 0 1 633.1 689.3" fill="none" stroke="#8c8c8c" stroke-width="2.4" opacity="0.75" stroke-linecap="round"/><path d="M610.5 575.8A63.7 37.9 -97.6 0 1 622 664.9L618.7 672.5A73.6 43.6 -97.5 1 1 605.5 569.4Z" fill="#333" stroke="#1c1c1c" stroke-width="0.6"/><path d="M598 686.7A63.7 37.9 -97.6 1 1 581.2 560.4A63.7 37.9 -97.6 1 1 598 686.7Z" fill="#0e0e0e" stroke="#161616" stroke-width="0.8"/><path d="M494 606.7L584 566C606 575 619 600 618.5 628C618 656 604 684 590 689L578 687.5L495.6 667.5Z" fill="url(#d18)" stroke="#0a0a0a" stroke-width="0.8" stroke-linejoin="round"/><path d="M494 606.7L584 566C592 569 598 574 603 580L524 590.3Z" fill="#2a2a2a" stroke="#0a0a0a" stroke-width="0.6" stroke-linejoin="round"/><path d="M493 606.5C481 607 472.5 622 472.8 638C473 654 482 667.5 495 667.7C506 667.5 513.5 654 513.3 637C513 620 505 606.5 493 606.5Z" fill="#212121" stroke="#0a0a0a" stroke-width="0.8"/><path d="M497 607.5C508 612 514 625 513.5 639C513 652 507 663 497.5 667.5" fill="none" stroke="#3a3a3a" stroke-width="1.6"/><path d="M494.5 607L494 637L476.5 646M494 637L510.5 660" fill="none" stroke="#0a0a0a" stroke-width="0.8"/><path d="M491.5 637a2.5 4 0 1 0 5 0a2.5 4 0 1 0 -5 0" fill="#3a3a3a" stroke="#0a0a0a" stroke-width="0.6"/><path d="M512 661L616 651" fill="none" stroke="#0a0a0a" stroke-width="0.7"/><path d="M1200 880C1207 872 1222 865 1240.5 859C1258 852 1275 845 1289 840C1306 834 1322 829 1338 824C1349 820 1360 816.5 1370 813C1377 806 1382 798 1386.5 791C1391 783 1396 776 1400 770L1410 756L1410 890L1190 890Z" fill="url(#d19)" stroke="#111" stroke-width="0.8"/><path d="M1238.5 860C1236 866 1237 872 1239 880" fill="none" stroke="#222" stroke-width="0.9"/><path d="M1338.5 824C1343 840 1349 860 1355 880" fill="none" stroke="#222" stroke-width="0.9"/><path d="M1238 867.5C1270 858 1310 848 1344 840.5C1365 836 1385 830 1400 826.5" fill="none" stroke="#222" stroke-width="0.9"/></svg></div>
<div class="abs" style="left:742px;top:171px;width:513px;height:31px;background:#f8f8f8;border:1px solid #a6a6a6"></div>
<svg class="ico" style="left:749.0px;top:177.0px" width="18" height="18" viewBox="0 0 18 18"><rect x="1.500" y="1.500" width="13" height="13" fill="#fff" stroke="#999" stroke-width="0.900"/><circle cx="8" cy="8" r="3.800" fill="#eaf6fc" stroke="#1d6f97" stroke-width="1.100"/><path d="M11 11l4.500 4.500" stroke="#8a8a8a" stroke-width="1.800"/></svg>
<svg class="ico" style="left:776.0px;top:177.0px" width="18" height="18" viewBox="0 0 18 18"><circle cx="7" cy="7" r="4.500" fill="#eaf6fc" stroke="#1d6f97" stroke-width="1.300"/><path d="M10.500 10.500l5 5" stroke="#8a8a8a" stroke-width="2.200" stroke-linecap="round"/><path d="M4.500 7h5M7 4.500v5" stroke="#0e5f86" stroke-width="1.400"/></svg>
<svg class="ico" style="left:803.0px;top:177.0px" width="18" height="18" viewBox="0 0 18 18"><circle cx="7" cy="7" r="4.500" fill="#eaf6fc" stroke="#1d6f97" stroke-width="1.300"/><path d="M10.500 10.500l5 5" stroke="#8a8a8a" stroke-width="2.200" stroke-linecap="round"/><path d="M4.500 7h5" stroke="#0e5f86" stroke-width="1.400"/></svg>
<svg class="ico" style="left:831.0px;top:177.0px" width="18" height="18" viewBox="0 0 18 18"><rect x="1.500" y="2.500" width="14" height="13" fill="#a5dcf3" stroke="#2a86ad" stroke-width="1"/><path d="M2 15l13-12h-13z" fill="#fff"/><path d="M5 13l8-8" stroke="#0e4f76" stroke-width="1.600"/></svg>
<svg class="ico" style="left:858.0px;top:177.0px" width="18" height="18" viewBox="0 0 18 18"><circle cx="11" cy="6.500" r="4.500" fill="url(#gsph)"/><circle cx="7" cy="11" r="5" fill="url(#gg)" stroke="#ccc" stroke-width="0.400"/></svg>
<div class="abs" style="left:878px;top:194px;width:0;height:0;border-left:4px solid transparent;border-bottom:4px solid #333"></div>
<svg class="ico" style="left:889.0px;top:177.0px" width="18" height="18" viewBox="0 0 18 18"><path d="M1.5 5.5h10.5v10.5h-10.5z" fill="#fff" stroke="#0e5f86" stroke-width="1.4" stroke-linejoin="round"/><path d="M1.5 5.5l4 -4h10.5l-4 4z" fill="#d3f1fc" stroke="#0e5f86" stroke-width="1.4" stroke-linejoin="round"/><path d="M12.0 5.5l4 -4v10.5l-4 4z" fill="#9fd8ef" stroke="#0e5f86" stroke-width="1.4" stroke-linejoin="round"/></svg>
<div class="abs" style="left:910px;top:194px;width:0;height:0;border-left:4px solid transparent;border-bottom:4px solid #333"></div>
<svg class="ico" style="left:921.0px;top:177.0px" width="18" height="18" viewBox="0 0 18 18"><path d="M1.5 5.5h10.5v10.5h-10.5z" fill="#f4fbfe" stroke="#9fd0e6" stroke-width="1" stroke-linejoin="round"/><path d="M1.5 5.5l4 -4h10.5l-4 4z" fill="#e6f7fd" stroke="#9fd0e6" stroke-width="1" stroke-linejoin="round"/><path d="M12.0 5.5l4 -4v10.5l-4 4z" fill="#d3f1fc" stroke="#9fd0e6" stroke-width="1" stroke-linejoin="round"/><rect x="8.500" y="8.500" width="7" height="8" fill="#f4f4f4" stroke="#8a8a8a" stroke-width="0.800"/><path d="M10 11h4M10 13h4M10 15h4" stroke="#777" stroke-width="0.700"/></svg>
<div class="abs" style="left:941px;top:194px;width:0;height:0;border-left:4px solid transparent;border-bottom:4px solid #333"></div>
<svg class="ico" style="left:952.0px;top:177.0px" width="18" height="18" viewBox="0 0 18 18"><rect x="1.500" y="1.500" width="12" height="13" fill="#fdfdfd" stroke="#999" stroke-width="0.800"/><path d="M1.500 4.500h12M1.500 7.500h12M1.500 10.500h12M5 1.500v13" stroke="#8a8a8a" stroke-width="0.700"/><rect x="7.500" y="9.500" width="9" height="7" rx="1" fill="#333"/><rect x="10" y="8.300" width="4" height="2" fill="#333"/><circle cx="12" cy="13" r="2" fill="#999" stroke="#ddd" stroke-width="0.600"/></svg>
<svg class="ico" style="left:980.0px;top:177.0px" width="18" height="18" viewBox="0 0 18 18"><path d="M1.5 7h9v9h-9z" fill="#fff" stroke="#1a7fae" stroke-width="1.1" stroke-linejoin="round"/><path d="M1.5 7l3 -3h9l-3 3z" fill="#d3f1fc" stroke="#1a7fae" stroke-width="1.1" stroke-linejoin="round"/><path d="M10.5 7l3 -3v9l-3 3z" fill="#9fd8ef" stroke="#1a7fae" stroke-width="1.1" stroke-linejoin="round"/><path d="M14.500 8v5M12 10.500h5" stroke="#111" stroke-width="1.300"/></svg>
<svg class="ico" style="left:1007.0px;top:177.0px" width="18" height="18" viewBox="0 0 18 18"><path d="M2.500 7.500l3-3h8l-3 3z" fill="#d3f1fc" stroke="#1a7fae" stroke-width="1"/><path d="M2.500 7.500h8v9h-8z" fill="#fff" stroke="#1a7fae" stroke-width="1"/><path d="M10.500 7.500l3-3v9l-3 3z" fill="#9fd8ef" stroke="#1a7fae" stroke-width="1"/><path d="M8 0.500v5M5.500 3h5M14.500 8v5M12 10.500h5" stroke="#111" stroke-width="1.200"/></svg>
<svg class="ico" style="left:1034.0px;top:177.0px" width="18" height="18" viewBox="0 0 18 18"><path d="M1.500 4.500l11-3 4 1.500-1.500 10-9 4.500z" fill="#bfe6f6" stroke="#4b9fc2" stroke-width="0.900"/><path d="M1.500 4.500l11-3-1 8.500-6 7.500z" fill="#e4f5fc" stroke="#4b9fc2" stroke-width="0.700"/><path d="M6 14l6-4M7 16l7-4.500" stroke="#7fc6e2" stroke-width="1.100"/></svg>
<svg class="ico" style="left:1061.0px;top:177.0px" width="18" height="18" viewBox="0 0 18 18"><path d="M2 1.500l3 3M5 1.500l-3 3M9 6l3 3M12 6l-3 3" stroke="#8d5f10" stroke-width="1.100"/><path d="M9.500 0.500l-4 9" stroke="#8d5f10" stroke-width="1.100" stroke-dasharray="3 1.500"/><path d="M6.500 8.500v7l7-1.500M6.500 15.500l-3 2" stroke="#8d5f10" stroke-width="1.100" fill="none"/></svg>
<div class="abs" style="left:1082px;top:194px;width:0;height:0;border-left:4px solid transparent;border-bottom:4px solid #333"></div>
<svg class="ico" style="left:1092.0px;top:177.0px" width="18" height="18" viewBox="0 0 18 18"><path d="M5 3.500h11l-4 9h-11z" fill="#fbf7ee" stroke="#8d5f10" stroke-width="1.400"/><ellipse cx="12.5" cy="14" rx="4.200" ry="2.600" fill="#fff" stroke="#333" stroke-width="1"/><circle cx="12.5" cy="14" r="1.500" fill="#333"/></svg>
<svg class="ico" style="left:1120.0px;top:177.0px" width="18" height="18" viewBox="0 0 18 18"><path d="M10.500 0.500l-6 15" stroke="#8d5f10" stroke-width="1.300" stroke-dasharray="5 2 2 2"/><ellipse cx="12.5" cy="14" rx="4.200" ry="2.600" fill="#fff" stroke="#333" stroke-width="1"/><circle cx="12.5" cy="14" r="1.500" fill="#333"/></svg>
<svg class="ico" style="left:1147.0px;top:177.0px" width="18" height="18" viewBox="0 0 18 18"><path d="M2 2l3 3M5 2l-3 3M9 3.500l3 3M12 3.500l-3 3M2 9.500l3 3M5 9.500l-3 3" stroke="#8d5f10" stroke-width="1.100"/><ellipse cx="12.5" cy="14" rx="4.200" ry="2.600" fill="#fff" stroke="#333" stroke-width="1"/><circle cx="12.5" cy="14" r="1.500" fill="#333"/></svg>
<svg class="ico" style="left:1174.0px;top:177.0px" width="18" height="18" viewBox="0 0 18 18"><path d="M6.500 1.500v11l9-1.500M6.500 12.500l-4.500 3.500" fill="none" stroke="#8d5f10" stroke-width="1.200"/><circle cx="6.500" cy="2" r="1.100" fill="#8d5f10"/><ellipse cx="13" cy="14" rx="4.200" ry="2.600" fill="#fff" stroke="#333" stroke-width="1"/><circle cx="13" cy="14" r="1.500" fill="#333"/></svg>
<svg class="ico" style="left:1201.0px;top:177.0px" width="18" height="18" viewBox="0 0 18 18"><rect x="0.500" y="1.500" width="10" height="6" fill="#fbf3dc" stroke="#999" stroke-width="0.900"/><path d="M10.500 4.500h5.500v4" stroke="#333" stroke-width="1" fill="none"/><path d="M14 8h4l-2 2.500z" fill="#333"/><ellipse cx="13.5" cy="14" rx="4.200" ry="2.600" fill="#fff" stroke="#333" stroke-width="1"/><circle cx="13.5" cy="14" r="1.500" fill="#333"/></svg>
<svg class="ico" style="left:1228.5px;top:176.5px" width="19" height="19" viewBox="0 0 19 19"><path d="M4 3l5 6.500-4 5M9 9.500h6" stroke="#555" stroke-width="1.200" fill="none"/><circle cx="4" cy="3" r="2.200" fill="#3aa845"/><circle cx="4.500" cy="15" r="2.200" fill="#2b8fd0"/><circle cx="15.500" cy="9.500" r="2.200" fill="#e04a3a"/></svg>
<div class="abs" style="left:0;top:0;width:1400px;height:24px;background:#e3e3e3"></div>
<svg class="ico" style="left:9px;top:-2px" width="16" height="16" viewBox="0 0 16 16"><rect x="0.5" y="0.5" width="14" height="14" fill="#fff" stroke="#999"/><rect x="3.5" y="2.5" width="8" height="8" fill="#fff" stroke="#222" stroke-width="1.2"/><rect x="6" y="2" width="6.5" height="5.5" fill="#1e96e0"/></svg><svg class="ico" style="left:44px;top:-2px" width="14" height="16" viewBox="0 0 14 16"><path d="M1.5 0.5h7l4 4v10h-11z" fill="url(#gg)" stroke="#9a9a9a"/><path d="M8.5 0.5v4h4" fill="#f4f4f4" stroke="#9a9a9a"/></svg><svg class="ico" style="left:67px;top:-1px" width="17" height="14" viewBox="0 0 17 14"><path d="M1.5 12.5v-10h5l1.5 2h6v8z" fill="#e9c16f" stroke="#b78a2f"/><path d="M1.5 12.5l3-6.500h11.500l-3 6.500z" fill="#fbe7ae" stroke="#b78a2f"/><path d="M11 1l3-1v2z" fill="#222"/></svg><svg class="ico" style="left:94px;top:-2px" width="14" height="16" viewBox="0 0 14 16"><path d="M0.500 0h13v14.500h-13z" fill="#8a8a8a" stroke="#6f6f6f"/><rect x="2.500" y="0" width="9" height="6" fill="#f2f2f2"/><rect x="3.500" y="9.500" width="7" height="5" fill="#b9e3f5" stroke="#555"/><rect x="5" y="10.500" width="2" height="3.500" fill="#fff"/></svg><svg class="ico" style="left:118px;top:-1px" width="16" height="12" viewBox="0 0 16 12"><path d="M3.500 5.500c3-4.500 10-3 9.500 3.500" fill="none" stroke="#9c9c9c" stroke-width="2"/><path d="M1 2v6h6z" fill="#9c9c9c"/></svg><div class="arr arrg" style="left:142.500px;top:3px"></div><svg class="ico" style="left:160px;top:-1px" width="16" height="12" viewBox="0 0 16 12"><path d="M12.500 5.500c-3-4.500-10-3-9.500 3.500" fill="none" stroke="#9c9c9c" stroke-width="2"/><path d="M15 2v6h-6z" fill="#9c9c9c"/></svg><div class="arr arrg" style="left:184px;top:3px"></div><svg class="ico" style="left:201px;top:-3px" width="16" height="16" viewBox="0 0 16 16"><rect x="1" y="1" width="3" height="3" fill="#bfe8f8" stroke="#1d86b4" stroke-width="0.800"/><rect x="1" y="6" width="3" height="3" fill="#bfe8f8" stroke="#1d86b4" stroke-width="0.800"/><rect x="1" y="11" width="3" height="3" fill="#bfe8f8" stroke="#1d86b4" stroke-width="0.800"/><path d="M6 8.500h8M6 11h8M6 13.500h8" stroke="#555" stroke-width="1"/><path d="M6 3.500l3-3v2h2v2h-2v2zM15 2.500l-3-3v2h-1v2h1v2z" fill="#0e5f86"/></svg><svg class="ico" style="left:227px;top:-2px" width="16" height="15" viewBox="0 0 16 15"><rect x="0.500" y="6.500" width="6" height="7" fill="#f4f4f4" stroke="#aaa"/><rect x="6.500" y="0.500" width="8" height="6" fill="#f4f4f4" stroke="#aaa"/><rect x="4.500" y="3.500" width="7" height="6" rx="1" fill="#d8f0fb" stroke="#1d6f97" stroke-width="1.300"/></svg><div class="arr" style="left:250.500px;top:3px"></div><svg class="ico" style="left:270px;top:0px" width="14" height="10" viewBox="0 0 14 10"><path d="M2 1.500c3 0 6 6 9.500 6M11.500 1.500c-3.500 0-6 6-9.500 6" fill="none" stroke="#333" stroke-width="2.400"/><path d="M2 1.500c3 0 6 6 9.500 6M11.500 1.500c-3.500 0-6 6-9.500 6" fill="none" stroke="#f2f2f2" stroke-width="0.800"/></svg><div class="abs" style="left:297px;top:2px;width:9px;height:1.500px;background:#333"></div><div class="arr" style="left:298px;top:5px;border-top-color:#222"></div>
<div class="abs" style="left:34px;top:0;width:1px;height:18px;background:#b5b5b5"></div>
<div class="abs" style="left:289px;top:0;width:1px;height:18px;background:#b5b5b5"></div>
<div class="t" style="left:714px;top:-1.5px;font-size:13px;color:#222;letter-spacing:-0.32px">DCD1007 (活动的) - Creo Parametric 5.0</div>
<div class="abs" style="left:0;top:24px;width:74px;height:27px;background:#6b6b6b;color:#fff;font-size:13.5px;line-height:27.5px;text-align:center">文件</div>
<div class="abs" style="left:74px;top:24px;width:68px;height:28px;background:#f7f7f7;color:#111;font-size:13.5px;line-height:25.5px;text-align:center;border-top:1px solid #c8c8c8">模型</div>
<div class="tab" style="left:142px;width:68px">分析</div>
<div class="tab" style="left:210px;width:68px">注释</div>
<div class="tab" style="left:278px;width:94px">人体模型</div>
<div class="tab" style="left:372px;width:68px">工具</div>
<div class="tab" style="left:440px;width:68px">视图</div>
<div class="tab" style="left:508px;width:68px">框架</div>
<div class="tab" style="left:576px;width:95px">应用程序</div>
<div class="abs" style="left:0;top:51px;width:1400px;height:111px;background:#f8f8f8"></div>
<div class="abs" style="left:0;top:138px;width:1343px;height:24px;background:#efefef"></div>
<div class="abs" style="left:0;top:162px;width:1400px;height:2px;background:#a4a4a4"></div>
<div class="gsep" style="left:125px"></div>
<div class="gsep" style="left:226px"></div>
<div class="gsep" style="left:408px"></div>
<div class="gsep" style="left:556px"></div>
<div class="gsep" style="left:634px"></div>
<div class="gsep" style="left:690px"></div>
<div class="gsep" style="left:1000px"></div>
<div class="gsep" style="left:1227px"></div>
<div class="gsep" style="left:1342px"></div>
<div class="abs" style="left:346px;top:60px;width:1px;height:68px;background:#dcdcdc"></div>
<div class="glab" style="left:59px">操作</div>
<div class="arr " style="left:71.5px;top:148px"></div>
<div class="glab" style="left:172px">获取数据</div>
<div class="arr " style="left:195.5px;top:148px"></div>
<div class="glab" style="left:314px">元件</div>
<div class="arr " style="left:326.5px;top:148px"></div>
<div class="glab" style="left:478px">基准</div>
<div class="arr " style="left:490.5px;top:148px"></div>
<div class="glab" style="left:592px">切口和曲面</div>
<div class="arr " style="left:621.0px;top:148px"></div>
<div class="glab" style="left:658px">修饰符</div>
<div class="arr " style="left:676.0px;top:148px"></div>
<div class="glab" style="left:842px">模型显示</div>
<div class="arr " style="left:865.5px;top:148px"></div>
<div class="glab" style="left:1110px">模型意图</div>
<div class="arr " style="left:1133.5px;top:148px"></div>
<div class="glab" style="left:1281px">调查</div>
<div class="arr " style="left:1293.5px;top:148px"></div>
<svg class="ico" style="left:13px;top:56px" width="30" height="32" viewBox="0 0 30 32"><path d="M1 4.5h6v6h-6z" fill="url(#gb)" stroke="#1d86b4" stroke-width="1" stroke-linejoin="round"/><path d="M1 4.5l2.5 -2.5h6l-2.5 2.5z" fill="#c9eefb" stroke="#1d86b4" stroke-width="1" stroke-linejoin="round"/><path d="M7 4.5l2.5 -2.5v6l-2.5 2.5z" fill="#7cc8e6" stroke="#1d86b4" stroke-width="1" stroke-linejoin="round"/><path d="M1 14.5h6v6h-6z" fill="url(#gb)" stroke="#1d86b4" stroke-width="1" stroke-linejoin="round"/><path d="M1 14.5l2.5 -2.5h6l-2.5 2.5z" fill="#c9eefb" stroke="#1d86b4" stroke-width="1" stroke-linejoin="round"/><path d="M7 14.5l2.5 -2.5v6l-2.5 2.5z" fill="#7cc8e6" stroke="#1d86b4" stroke-width="1" stroke-linejoin="round"/><path d="M1 24.5h6v6h-6z" fill="url(#gb)" stroke="#1d86b4" stroke-width="1" stroke-linejoin="round"/><path d="M1 24.5l2.5 -2.5h6l-2.5 2.5z" fill="#c9eefb" stroke="#1d86b4" stroke-width="1" stroke-linejoin="round"/><path d="M7 24.5l2.5 -2.5v6l-2.5 2.5z" fill="#7cc8e6" stroke="#1d86b4" stroke-width="1" stroke-linejoin="round"/><path d="M11.500 21.500h17M11.500 25h17M11.500 28.500h15" stroke="#8a8a8a" stroke-width="1.800"/><path d="M15.300 9.500a5.700 5.700 0 0 1 9.500-3.800" fill="none" stroke="#0e5f86" stroke-width="2.700"/><path d="M22 6.200h7.300l-3.200 4.600z" fill="#0e5f86"/><path d="M27 10.500a5.700 5.700 0 0 1 -9.500 3.800" fill="none" stroke="#0e5f86" stroke-width="2.700"/><path d="M20.300 13.800h-7.300l3.200-4.600z" fill="#0e5f86"/></svg>
<div class="tc " style="left:28px;top:98px;">重新生成</div>
<div class="arr " style="left:24.5px;top:119px"></div>
<svg class="ico" style="left:60px;top:57px" width="17" height="17" viewBox="0 0 17 17"><path d="M0.5 1.5h6l3 3v7h-9z" fill="#efefef" stroke="#c4c4c4"/><path d="M2.5 6.5h5" stroke="#c4c4c4" stroke-width="0.900"/><path d="M2.5 8.5h5" stroke="#c4c4c4" stroke-width="0.900"/><path d="M7.5 5.5h5l3 3v7.5h-8z" fill="#f6f6f6" stroke="#9f9f9f"/><path d="M9.5 10.5h4" stroke="#9f9f9f" stroke-width="0.900"/><path d="M9.5 12.5h4" stroke="#9f9f9f" stroke-width="0.900"/><path d="M9.5 14.5h4" stroke="#9f9f9f" stroke-width="0.900"/></svg>
<div class="t dis" style="left:79px;top:57px;">复制</div>
<svg class="ico" style="left:60px;top:84px" width="17" height="17" viewBox="0 0 17 17"><rect x="0.500" y="3.500" width="11" height="12" rx="1" fill="#e4e4e4" stroke="#c0c0c0"/><path d="M3.500 3.500l2-2.500h1l2 2.500z" fill="#dcdcdc" stroke="#bdbdbd"/><path d="M8.5 6.5h4l3 3v6.5h-7z" fill="#f6f6f6" stroke="#9f9f9f"/><path d="M10.5 11.5h3" stroke="#9f9f9f" stroke-width="0.900"/><path d="M10.5 13.5h3" stroke="#9f9f9f" stroke-width="0.900"/></svg>
<div class="t dis" style="left:79px;top:85px;">粘贴</div>
<div class="arr arrg" style="left:109.5px;top:91px"></div>
<svg class="ico" style="left:61px;top:113px" width="14" height="14" viewBox="0 0 14 14"><path d="M1.500 2l10.500 10.500M12 1.500l-10.500 11" stroke="#9b9b9b" stroke-width="1.800" stroke-linecap="round"/></svg>
<div class="t dis" style="left:79px;top:112px;">删除</div>
<div class="arr arrg" style="left:109.5px;top:119px"></div>
<svg class="ico" style="left:133px;top:57px" width="17" height="17" viewBox="0 0 17 17"><circle cx="10.500" cy="6" r="4.800" fill="url(#gsph2)" stroke="#8088c8" stroke-width="0.600"/><path d="M0.7 8.5h5.5v5.5h-5.5z" fill="url(#gb)" stroke="#1d86b4" stroke-width="1" stroke-linejoin="round"/><path d="M0.7 8.5l2.5 -2.5h5.5l-2.5 2.5z" fill="#c9eefb" stroke="#1d86b4" stroke-width="1" stroke-linejoin="round"/><path d="M6.2 8.5l2.5 -2.5v5.5l-2.5 2.5z" fill="#7cc8e6" stroke="#1d86b4" stroke-width="1" stroke-linejoin="round"/><path d="M9.500 5l4.200 9c-1.500 2-7 2-8.500 0z" fill="#efd39a" stroke="#b8923f" stroke-width="0.800"/></svg>
<div class="t " style="left:152px;top:57px;">用户定义特征</div>
<svg class="ico" style="left:133px;top:84px" width="17" height="17" viewBox="0 0 17 17"><path d="M0.800 3.500l3-2.500h8l-3 2.500z" fill="#fff" stroke="#777" stroke-width="0.800"/><path d="M0.800 3.500h8v9h-8z" fill="#f1f1f1" stroke="none"/><path d="M0.800 3.500v9" stroke="#123c55" stroke-width="1.600"/><path d="M3.500 4.500l3 3" stroke="#111" stroke-width="1"/><path d="M4 8h3v-3z" fill="#111"/><rect x="8" y="7" width="7.500" height="9" fill="#b4e4f7"/><path d="M8.300 6.500v10" stroke="#0d3f5c" stroke-width="1.800"/></svg>
<div class="t " style="left:152px;top:85px;">复制几何</div>
<svg class="ico" style="left:133px;top:112px" width="17" height="17" viewBox="0 0 17 17"><path d="M0.500 2.500h6v10h-6z" fill="url(#gy)" stroke="#b8923f"/><path d="M0.500 12.500h9v2h-9z" fill="#f3d695" stroke="#b8923f" stroke-width="0.800"/><rect x="4.500" y="1.500" width="9" height="8.500" fill="#b4e4f7" stroke="#1d86b4"/><rect x="9" y="9" width="6.500" height="7" fill="#b4e4f7"/><path d="M6 3l4 4" stroke="#111" stroke-width="1.200"/><path d="M6.500 7.500h4v-4z" fill="#111"/></svg>
<div class="t " style="left:152px;top:112px;">收缩包络</div>
<svg class="ico" style="left:233px;top:57px" width="32" height="30" viewBox="0 0 32 30"><path d="M1.500 7l4-3.500h5v19.500h16.500l-4 3.500h-21.500z" fill="#f3d695" stroke="#c09a4a" stroke-width="0.800"/><path d="M1.500 7h6.500v16.500h16v3h-22.500z" fill="url(#gy)" stroke="#c09a4a" stroke-width="0.800"/><path d="M15.5 5.5h11v11h-11z" fill="url(#gb2)" stroke="#1d86b4" stroke-width="1" stroke-linejoin="round"/><path d="M15.5 5.5l3.5 -3.5h11l-3.5 3.5z" fill="#d6f2fc" stroke="#1d86b4" stroke-width="1" stroke-linejoin="round"/><path d="M26.5 5.5l3.5 -3.5v11l-3.5 3.5z" fill="#6bbfdf" stroke="#1d86b4" stroke-width="1" stroke-linejoin="round"/><path d="M14.500 16l-4.500 4.500" stroke="#222" stroke-width="1.300"/><path d="M9 21.500v-4.500l4.500 4.500z" fill="#222"/></svg>
<div class="tc " style="left:249px;top:98px;">组装</div>
<div class="arr " style="left:245.5px;top:119px"></div>
<svg class="ico" style="left:273px;top:57px" width="17" height="17" viewBox="0 0 17 17"><path d="M0.500 2.500h5v9h8v3h-13z" fill="url(#gy)" stroke="#c09a4a" stroke-width="0.900"/><rect x="4.500" y="1" width="9" height="8.500" fill="url(#gb2)" stroke="#1d86b4"/><rect x="9" y="9" width="6.500" height="6.500" fill="#f3f3f3" stroke="#8f8f8f"/></svg>
<div class="t " style="left:292px;top:57px;">创建</div>
<svg class="ico" style="left:275px;top:85px" width="14" height="15" viewBox="0 0 14 15"><path d="M4.500 4a5 5 0 1 0 5-1" fill="none" stroke="#9d9d9d" stroke-width="1.700"/><path d="M2 0.500l4.500 1-2 4.500z" fill="#9d9d9d"/></svg>
<div class="t dis" style="left:292px;top:85px;">重复</div>
<svg class="ico" style="left:274px;top:112px" width="17" height="17" viewBox="0 0 17 17"><path d="M1 2.500c4 3 4 9 0 12h5v-12z" fill="#efe9f7" stroke="#9a6bc0" stroke-width="1"/><path d="M15 2.500c-4 3-4 9 0 12h-4.500v-12z" fill="#fff" stroke="#555" stroke-width="1"/><path d="M8.300 1v15" stroke="#777" stroke-width="0.800"/></svg>
<div class="t " style="left:292px;top:112px;">镜像元件</div>
<svg class="ico" style="left:364px;top:57px" width="30" height="30" viewBox="0 0 30 30"><path d="M2 3l7 7M9 3l-7 7" stroke="#9a6a12" stroke-width="1.400"/><path d="M11 24c-2-2-4.500-5-5.500-7.500-0.500-1.500 1.200-2.200 2.200-1l2.300 2.700v-7.700c0-1.600 2.200-1.600 2.200 0v4-5c0-1.600 2.300-1.600 2.300 0v5-4c0-1.600 2.200-1.600 2.200 0v5-2.500c0-1.500 2.100-1.500 2.100 0v7c0 2.500-1 4-2 6z" fill="#fff" stroke="#444" stroke-width="1.100" stroke-linejoin="round" transform="rotate(-12 14 18) translate(-1.500,-3.500) scale(1.130)"/></svg>
<div class="tc " style="left:378px;top:98px;">拖动元件</div>
<svg class="ico" style="left:416px;top:60px" width="32" height="26" viewBox="0 0 32 26"><path d="M8.500 3.500h21l-8 19h-20z" fill="#fbf7ee" stroke="#9a6a12" stroke-width="1.700" stroke-linejoin="miter"/></svg>
<div class="tc " style="left:431px;top:98px;">平面</div>
<svg class="ico" style="left:456px;top:57px" width="17" height="17" viewBox="0 0 17 17"><path d="M11.500 1.500l-7 14" stroke="#8d5f10" stroke-width="1.300" stroke-dasharray="5 2 2 2"/></svg>
<div class="t " style="left:475px;top:57px;">轴</div>
<svg class="ico" style="left:455px;top:85px" width="17" height="17" viewBox="0 0 17 17"><path d="M3.5 1.5l4 4M7.5 1.5l-4 4" stroke="#8d5f10" stroke-width="1.100"/><path d="M10.5 4l4 4M14.5 4l-4 4" stroke="#8d5f10" stroke-width="1.100"/><path d="M2 9.5l4 4M6 9.5l-4 4" stroke="#8d5f10" stroke-width="1.100"/></svg>
<div class="t " style="left:475px;top:85px;">点</div>
<div class="arr " style="left:495.5px;top:91px"></div>
<svg class="ico" style="left:455px;top:111px" width="19" height="19" viewBox="0 0 19 19"><path d="M7.500 2v11.500l9-1.500M7.500 13.500l-5 4" fill="none" stroke="#7b5410" stroke-width="1.300"/><circle cx="7.500" cy="2.500" r="1.200" fill="#7b5410"/><circle cx="16.500" cy="12" r="1.200" fill="#7b5410"/><circle cx="2.500" cy="17.300" r="1.200" fill="#7b5410"/></svg>
<div class="t " style="left:475px;top:112px;">坐标系</div>
<svg class="ico" style="left:518px;top:58px" width="30" height="30" viewBox="0 0 30 30"><rect x="2.0" y="2.0" width="1" height="1" fill="#666"/><rect x="2.0" y="8.0" width="1" height="1" fill="#666"/><rect x="2.0" y="14.0" width="1" height="1" fill="#666"/><rect x="2.0" y="20.0" width="1" height="1" fill="#666"/><rect x="2.0" y="26.0" width="1" height="1" fill="#666"/><rect x="8.2" y="2.0" width="1" height="1" fill="#666"/><rect x="8.2" y="26.0" width="1" height="1" fill="#666"/><rect x="14.4" y="2.0" width="1" height="1" fill="#666"/><rect x="14.4" y="26.0" width="1" height="1" fill="#666"/><rect x="20.6" y="2.0" width="1" height="1" fill="#666"/><rect x="20.6" y="26.0" width="1" height="1" fill="#666"/><rect x="26.8" y="2.0" width="1" height="1" fill="#666"/><rect x="26.8" y="8.0" width="1" height="1" fill="#666"/><rect x="26.8" y="14.0" width="1" height="1" fill="#666"/><rect x="26.8" y="20.0" width="1" height="1" fill="#666"/><rect x="26.8" y="26.0" width="1" height="1" fill="#666"/><path d="M2 12c4-12 9-10 13 2s9 14 13 0" fill="none" stroke="#1a86c8" stroke-width="1.800"/></svg>
<div class="tc " style="left:533px;top:98px;">草绘</div>
<svg class="ico" style="left:573px;top:57px" width="17" height="17" viewBox="0 0 17 17"><path d="M1.500 4.500l3-3h11l-3 3z" fill="#e9f6fc" stroke="#8aa" stroke-width="0.800"/><path d="M1.500 4.500h11v11h-11z" fill="#f5f5f5" stroke="#9aa" stroke-width="0.800"/><path d="M12.500 4.500l3-3v11l-3 3z" fill="#cfe9f5" stroke="#8aa" stroke-width="0.800"/><path d="M4 15v-7.500c0-3 5.500-3 5.500 0v7.500" fill="#bfe6f6" stroke="#17709c" stroke-width="1.400"/><path d="M6.700 6v9" stroke="#17709c" stroke-width="0.800"/></svg>
<div class="t " style="left:593px;top:57px;">孔</div>
<svg class="ico" style="left:573px;top:84px" width="17" height="17" viewBox="0 0 17 17"><path d="M1.500 7.500h9v8h-9z" fill="#fff" stroke="#888" stroke-width="0.900"/><path d="M1.500 7.500l5.500-6h9l-5.500 6z" fill="#dff3fb" stroke="#6aa" stroke-width="0.800"/><path d="M10.500 7.500l5.500-6v8l-5.500 6z" fill="#6fc0e2" stroke="#2a86ad" stroke-width="0.800"/></svg>
<div class="t " style="left:593px;top:85px;">拉伸</div>
<svg class="ico" style="left:573px;top:112px" width="17" height="17" viewBox="0 0 17 17"><path d="M8.300 0.500v16" stroke="#666" stroke-width="0.800" stroke-dasharray="3 1.500"/><ellipse cx="4.500" cy="9" rx="3.200" ry="2.300" fill="#eee" stroke="#888" stroke-width="0.900"/><circle cx="12.200" cy="9" r="3" fill="#dff3fb" stroke="#1d86b4" stroke-width="1.500"/></svg>
<div class="t " style="left:593px;top:112px;">旋转</div>
<svg class="ico" style="left:646px;top:58px" width="30" height="30" viewBox="0 0 30 30"><path d="M1.500 5.500l4-4h22l-4 4z" fill="#efefef" stroke="#bbb" stroke-width="0.700"/><path d="M1.500 5.500h22v22h-22z" fill="#e9e9e9" stroke="#bbb" stroke-width="0.700"/><path d="M23.500 5.500l4-4v22l-4 4z" fill="#d0d0d0" stroke="#bbb" stroke-width="0.700"/><rect x="5" y="9" width="3.500" height="3.500" fill="#fafafa" stroke="#a9a9a9" stroke-width="0.800"/><rect x="5" y="15" width="3.500" height="3.500" fill="#fafafa" stroke="#a9a9a9" stroke-width="0.800"/><rect x="5" y="21" width="3.500" height="3.500" fill="#fafafa" stroke="#a9a9a9" stroke-width="0.800"/><rect x="11" y="9" width="3.500" height="3.500" fill="#fafafa" stroke="#a9a9a9" stroke-width="0.800"/><rect x="11" y="15" width="3.500" height="3.500" fill="#fafafa" stroke="#a9a9a9" stroke-width="0.800"/><rect x="11" y="21" width="3.500" height="3.500" fill="#fafafa" stroke="#a9a9a9" stroke-width="0.800"/><rect x="17" y="9" width="3.500" height="3.500" fill="#fafafa" stroke="#a9a9a9" stroke-width="0.800"/><rect x="17" y="15" width="3.500" height="3.500" fill="#fafafa" stroke="#a9a9a9" stroke-width="0.800"/><rect x="17" y="21" width="3.500" height="3.500" fill="#fafafa" stroke="#a9a9a9" stroke-width="0.800"/></svg>
<div class="tc " style="left:661px;top:98px;">阵列</div>
<div class="arr " style="left:657.5px;top:119px"></div>
<svg class="ico" style="left:704px;top:57px" width="32" height="30" viewBox="0 0 32 30"><rect x="1.500" y="1.500" width="24" height="25" fill="#fdfdfd" stroke="#999" stroke-width="0.800"/><path d="M1.500 5.7h24" stroke="#8a8a8a" stroke-width="0.800"/><path d="M1.500 9.9h24" stroke="#8a8a8a" stroke-width="0.800"/><path d="M1.500 14.1h24" stroke="#8a8a8a" stroke-width="0.800"/><path d="M1.500 18.3h24" stroke="#8a8a8a" stroke-width="0.800"/><path d="M1.500 22.5h24" stroke="#8a8a8a" stroke-width="0.800"/><path d="M8 1.500v25" stroke="#8a8a8a" stroke-width="0.800"/><rect x="17" y="20" width="13" height="9" rx="1.500" fill="#333"/><rect x="20" y="18" width="6" height="3" fill="#333"/><circle cx="23.500" cy="24.500" r="3" fill="#888" stroke="#ddd" stroke-width="0.800"/></svg>
<div class="tc " style="left:720px;top:98px;">管理视图</div>
<div class="arr " style="left:716.5px;top:119px"></div>
<svg class="ico" style="left:752px;top:57px" width="30" height="30" viewBox="0 0 30 30"><path d="M1.500 9.500h9v18h-9z" fill="#f1f1f1" stroke="#bbb" stroke-width="0.800"/><path d="M1.500 9.500l16-7.500h9l-16 7.500z" fill="#fff" stroke="#bbb" stroke-width="0.800"/><path d="M10.500 9.500l16-7.500v18l-16 7.500z" fill="#a5e0f6" stroke="#2a86ad" stroke-width="1"/></svg>
<div class="tc " style="left:767px;top:98px;">截面</div>
<div class="arr " style="left:763.5px;top:119px"></div>
<svg class="ico" style="left:793px;top:58px" width="28" height="28" viewBox="0 0 28 28"><circle cx="14" cy="14" r="12.500" fill="url(#gsph)"/><circle cx="10" cy="9.500" r="1.300" fill="#fff" opacity="0.900"/></svg>
<div class="tc " style="left:807px;top:98px;">外观</div>
<div class="arr " style="left:803.5px;top:119px"></div>
<svg class="ico" style="left:831px;top:57px" width="17" height="17" viewBox="0 0 17 17"><path d="M1.500 3.500h3v9h9v3h-12z" fill="url(#gy)" stroke="#b8923f" stroke-width="1.200"/><rect x="8" y="3" width="2.500" height="6" fill="#b4e4f7" stroke="#1d86b4" stroke-width="1"/><rect x="12.500" y="1" width="2.500" height="6" fill="#b4e4f7" stroke="#1d86b4" stroke-width="1"/></svg>
<div class="t " style="left:851px;top:57px;">分解视图</div>
<svg class="ico" style="left:831px;top:86px" width="17" height="14" viewBox="0 0 17 14"><rect x="0.500" y="1.500" width="3" height="3.500" fill="none" stroke="#b5b5b5"/><rect x="0.500" y="8" width="3" height="3.500" fill="none" stroke="#b5b5b5"/><rect x="6.500" y="1.500" width="9" height="10" fill="#f6f6f6" stroke="#b5b5b5"/><rect x="8.500" y="3.500" width="5" height="6" fill="none" stroke="#c2c2c2"/></svg>
<div class="t dis" style="left:851px;top:85px;">切换状况</div>
<svg class="ico" style="left:831px;top:112px" width="17" height="17" viewBox="0 0 17 17"><path d="M2 11.500l10-1.500 3 3.500-10 1.500z" fill="#4db4e4" stroke="#1d78a8" stroke-width="0.700"/><path d="M4 9.500l8-1.200 1.500 1.500-8 1.200z" fill="#9bd8f2"/><path d="M2 4.500h6M8 2.500l2.500 2-2.500 2z" stroke="#222" fill="#222" stroke-width="1"/><path d="M11.500 1v3M11.500 2.500h2.500M14 1v3M12 7l3-2.500M12 5l3 2" stroke="#222" stroke-width="0.800" fill="none"/></svg>
<div class="t " style="left:851px;top:112px;">编辑位置</div>
<svg class="ico" style="left:911px;top:57px" width="32" height="30" viewBox="0 0 32 30"><path d="M2.5 9h19v19h-19z" fill="#ffffff" stroke="#0e5f86" stroke-width="1.5" stroke-linejoin="round"/><path d="M2.5 9l7 -7h19l-7 7z" fill="#a8def2" stroke="#0e5f86" stroke-width="1.5" stroke-linejoin="round"/><path d="M21.5 9l7 -7v19l-7 7z" fill="#7cc2de" stroke="#0e5f86" stroke-width="1.5" stroke-linejoin="round"/></svg>
<div class="tc " style="left:926px;top:98px;">显示样式</div>
<div class="arr " style="left:922.5px;top:119px"></div>
<svg class="ico" style="left:960px;top:57px" width="30" height="30" viewBox="0 0 30 30"><path d="M1.500 5.500l22-4.500 5 1.500-2 19-16 6.500z" fill="#c8ecf9" stroke="#5ba9c9" stroke-width="0.900"/><path d="M1.500 5.500l22-4.500-1.500 14-11.500 13z" fill="#e8f7fd" stroke="#5ba9c9" stroke-width="0.700"/><path d="M8 8l12-2.500-1 9-7 7.500z" fill="#fdfdfd" opacity="0.850"/><path d="M9 22l11-7.500M10 24.500l13-8.500M12 26.500l13-8" stroke="#7fc6e2" stroke-width="1.400"/><path d="M22 15l-11.500 13 16-6.500z" fill="none" stroke="#5ba9c9" stroke-width="0.700"/></svg>
<div class="tc " style="left:975px;top:98px;">透视图</div>
<svg class="ico" style="left:1015px;top:57px" width="30" height="30" viewBox="0 0 30 30"><rect x="1" y="1" width="27" height="28" fill="#fbe5b4" stroke="#d9b66b" stroke-width="0.800"/><path d="M8 1.500h20v19.500h-5c1-3-0.500-4.500-3-4.500s-4 1.500-3 4.500h-4.500v-7c-2.500 1-4-0.500-4-2.500s1.500-3.500 4-2.500c0-3-1-5-4.500-7.500z" fill="#b4e4f7" stroke="#2f95c2" stroke-width="1"/></svg>
<div class="tc " style="left:1030px;top:98px;">元件界面</div>
<svg class="ico" style="left:1069px;top:57px" width="32" height="30" viewBox="0 0 32 30"><path d="M2 18h11v11h-11z" fill="url(#gb2)" stroke="#17709c" stroke-width="1" stroke-linejoin="round"/><path d="M2 18l4 -4h11l-4 4z" fill="#d6f2fc" stroke="#17709c" stroke-width="1" stroke-linejoin="round"/><path d="M13 18l4 -4v11l-4 4z" fill="#5fb6d8" stroke="#17709c" stroke-width="1" stroke-linejoin="round"/><path d="M10 14v-11M6.500 6l3.500-4 3.500 4M14 13l8-8M17 4.500h5.500v5.500M15 18.500h10M21.500 14.500l4 4-4 4" fill="none" stroke="#222" stroke-width="1.400"/></svg>
<div class="tc " style="left:1085px;top:98px;">发布几何</div>
<svg class="ico" style="left:1118px;top:59px" width="29" height="26" viewBox="0 0 29 26"><rect x="0.800" y="0.800" width="26.500" height="23.500" fill="#fdfdfd" stroke="#8a8a8a" stroke-width="1"/><path d="M0.800 5.500h26.500" stroke="#666" stroke-width="1.200"/><path d="M0.800 10.2h26.500" stroke="#c0c0c0" stroke-width="0.800"/><path d="M0.800 14.9h26.500" stroke="#c0c0c0" stroke-width="0.800"/><path d="M0.800 19.6h26.500" stroke="#c0c0c0" stroke-width="0.800"/><path d="M7.4 5.500v18.800" stroke="#c0c0c0" stroke-width="0.800"/><path d="M14.0 5.500v18.800" stroke="#c0c0c0" stroke-width="0.800"/><path d="M20.6 5.500v18.800" stroke="#c0c0c0" stroke-width="0.800"/></svg>
<div class="tc " style="left:1132px;top:98px;">族表</div>
<div class="t " style="left:1157px;top:56px;font-size:13px;letter-spacing:-0.5px;font-weight:bold;color:#333">( )</div>
<div class="t " style="left:1176px;top:57px;">参数</div>
<svg class="ico" style="left:1157px;top:85px" width="16" height="16" viewBox="0 0 16 16"><rect x="0.500" y="0.500" width="13" height="13" fill="#f1f1f1" stroke="#aaa" stroke-width="0.700"/><path d="M1 14l13-13" stroke="#555" stroke-width="1"/><text x="1" y="7" font-size="7" font-family="Liberation Sans,sans-serif" fill="#111" font-weight="bold">15</text><path d="M8.500 9l4 5M12.500 9l-4 5" stroke="#111" stroke-width="1.200"/></svg>
<div class="t " style="left:1176px;top:85px;">切换尺寸</div>
<div class="t " style="left:1156px;top:112px;font-size:13.5px;font-weight:bold;color:#333">d=</div>
<div class="t " style="left:1176px;top:112px;">关系</div>
<svg class="ico" style="left:1243px;top:57px" width="30" height="30" viewBox="0 0 30 30"><path d="M1.500 2.500h14l5 5v20h-19z" fill="#f6f6f6" stroke="#bdbdbd" stroke-width="0.900"/><path d="M15.500 2.500v5h5" fill="#e9e9e9" stroke="#bdbdbd" stroke-width="0.900"/><rect x="4.500" y="8" width="2" height="2" fill="#2a8fd0"/><path d="M9 9h8" stroke="#777" stroke-width="1"/><rect x="4.500" y="13" width="2" height="2" fill="#2a8fd0"/><path d="M9 14h6" stroke="#777" stroke-width="1"/><rect x="4.500" y="18" width="2" height="2" fill="#2a8fd0"/><path d="M9 19h8" stroke="#777" stroke-width="1"/><rect x="4.500" y="23" width="2" height="2" fill="#2a8fd0"/><path d="M9 24h6" stroke="#777" stroke-width="1"/><rect x="19.500" y="0.500" width="9" height="10" rx="1.500" fill="#0e5f86"/><text x="24" y="9" font-size="10" font-weight="bold" font-family="Liberation Serif,serif" fill="#fff" text-anchor="middle">i</text></svg>
<div class="tc " style="left:1258px;top:98px;">物料清单</div>
<svg class="ico" style="left:1297px;top:57px" width="31" height="30" viewBox="0 0 31 30"><g transform="rotate(-38 13 18)" fill="none" stroke="#4a4a4a" stroke-width="2.200"><rect x="0" y="15" width="9" height="6" rx="3"/><rect x="8.500" y="15" width="9" height="6" rx="3"/><rect x="17" y="15" width="9" height="6" rx="3"/></g><rect x="20.500" y="1.500" width="9" height="10" rx="1.500" fill="#0e5f86"/><text x="25" y="10" font-size="10" font-weight="bold" font-family="Liberation Serif,serif" fill="#fff" text-anchor="middle">i</text></svg>
<div class="tc " style="left:1312px;top:98px;">参考查看</div>
<div class="tc " style="left:1312px;top:113px;">器</div>
<div class="abs" style="left:0;top:164px;width:339px;height:713px;background:#eceef1"></div>
<div class="abs" style="left:0;top:164px;width:339px;height:30px;background:#cfd0d3"></div>
<div class="abs" style="left:248px;top:164px;width:91px;height:3px;background:#adadad"></div>
<div class="abs" style="left:0;top:164px;width:70px;height:31px;background:#eef0f2;border-right:1px solid #b9bcc0"></div>
<div class="abs" style="left:70px;top:165px;width:105px;height:29px;background:#dfe1e4;border:1px solid #b9bcbf;border-left:none"></div>
<div class="abs" style="left:175px;top:165px;width:73px;height:29px;background:#dfe1e4;border:1px solid #b9bcbf"></div>
<svg class="ico" style="left:9px;top:170px" width="14" height="18" viewBox="0 0 14 18"><rect x="1.500" y="0.800" width="3.500" height="3.500" fill="#fff" stroke="#333" stroke-width="0.900"/><rect x="1.500" y="7" width="3.500" height="3.500" fill="#fff" stroke="#333" stroke-width="0.900"/><rect x="1.500" y="13" width="3.500" height="3.500" fill="#fff" stroke="#333" stroke-width="0.900"/><rect x="8.500" y="7" width="3.500" height="3.500" fill="#fff" stroke="#333" stroke-width="0.900"/></svg>
<div class="t" style="left:28px;top:171px;font-size:11px;color:#222">模型树</div>
<svg class="ico" style="left:79px;top:170px" width="19" height="18" viewBox="0 0 19 18"><path d="M0.500 2.500v7h9v-6h-4.500l-1-1z" fill="#f5dfa6" stroke="#b88f3c" stroke-width="0.800"/><path d="M3.500 5.500v7h9v-6h-4.500l-1-1z" fill="#f8e7b8" stroke="#b88f3c" stroke-width="0.800"/><path d="M7 9v7h10v-6h-5l-1-1z" fill="#fbefcb" stroke="#b88f3c" stroke-width="0.800"/></svg>
<div class="t" style="left:100px;top:171px;font-size:11px;color:#555">文件夹浏览器</div>
<svg class="ico" style="left:184px;top:171px" width="17" height="16" viewBox="0 0 17 16"><path d="M0.500 2.500v12h15v-10h-8l-1.500-2z" fill="#f8e4ae" stroke="#b88f3c" stroke-width="0.900"/><path d="M8 6.500v6M5 9.500h6M5.800 7.300l4.400 4.400M10.200 7.300l-4.400 4.400" stroke="#0e3f6a" stroke-width="0.900"/><circle cx="8" cy="9.500" r="1.300" fill="#fff"/></svg>
<div class="t" style="left:205px;top:171px;font-size:11px;color:#555">收藏夹</div>
<div class="t" style="left:23px;top:200px;font-size:11px;font-weight:bold;color:#222">模型树</div>
<svg class="ico" style="left:215px;top:199px" width="18" height="19" viewBox="0 0 18 19"><path d="M1 3h7.500v3h-2.500v-1.200h-2.800v1.200h-2.200z" fill="#444"/><rect x="3.500" y="6" width="2.600" height="11.500" fill="#e5b860" stroke="#9c7424" stroke-width="0.700"/><rect x="11.500" y="2" width="1.600" height="8" fill="#555"/><rect x="10.800" y="10" width="3" height="7.500" rx="1" fill="#e7a431" stroke="#9c6a14" stroke-width="0.600"/></svg>
<div class="arr" style="left:242.500px;top:207px"></div>
<svg class="ico" style="left:261px;top:199px" width="17" height="19" viewBox="0 0 17 19"><path d="M1.500 1.500h10l4 4v12h-14z" fill="#fbfbfb" stroke="#8e8e8e" stroke-width="0.900"/><path d="M4 7h1.500M4 10.500h1.500M4 14h1.500" stroke="#444" stroke-width="1.200"/><path d="M7.500 7h5.500M7.500 10.500h5.500M7.500 14h5.500" stroke="#777" stroke-width="0.900"/></svg>
<div class="arr" style="left:287.500px;top:207px"></div>
<svg class="ico" style="left:309px;top:199px" width="21" height="20" viewBox="0 0 21 20"><g fill="none" stroke="#bcbcbc" stroke-width="0.900"><rect x="1.500" y="1.500" width="4" height="4"/><rect x="1.500" y="8" width="4" height="4"/><rect x="1.500" y="14.500" width="4" height="4"/><rect x="9" y="8" width="4" height="4"/><path d="M8 3.500h10v12" stroke-dasharray="2 1.500"/></g><ellipse cx="14.500" cy="15" rx="4" ry="2.300" fill="none" stroke="#9a9a9a" stroke-width="1"/><circle cx="14.500" cy="15" r="1" fill="#9a9a9a"/><path d="M10.500 11.500l8 7" stroke="#9a9a9a" stroke-width="1"/></svg>
<svg class="ico" style="left:10px;top:230px" width="16" height="16" viewBox="0 0 16 16"><path d="M1.500 1.500h12l-4.700 6v6.500l-2.600-1.700v-4.800z" fill="#fff" stroke="#555" stroke-width="1.100" stroke-linejoin="round"/></svg>
<div class="abs" style="left:31px;top:224px;width:257px;height:29px;background:#fff;border:1px solid #c6c9cc"></div>
<svg class="ico" style="left:272px;top:233px" width="10" height="10" viewBox="0 0 10 10"><path d="M1.500 1.500l7 7M8.500 1.500l-7 7" stroke="#8b8b8b" stroke-width="1"/></svg>
<div class="arr" style="left:294.500px;top:236px"></div>
<svg class="ico" style="left:315px;top:232px" width="12" height="12" viewBox="0 0 12 12"><path d="M6 1v10M1 6h10" stroke="#7f7f7f" stroke-width="2.300"/></svg>
<div class="abs" style="left:5px;top:262px;width:329px;height:615px;background:#fdfdfd;border-top:1px solid #e2e4e7"></div>
<div class="abs" style="left:339px;top:164px;width:2px;height:713px;background:#9a9a9a"></div>
<div class="abs" style="left:338px;top:164px;width:1px;height:713px;background:#c9ccd0"></div>
<svg class="ico" style="left:8px;top:266.3px" width="15" height="15" viewBox="0 0 15 15"><path d="M1.5 3.5l2-2h9v9.500l-2 2h-9z" fill="#f1d189" stroke="#c9a04e" stroke-width="0.800"/><path d="M1.500 3.500h9v9.500h-9z" fill="#fbe7b6" stroke="#c9a04e" stroke-width="0.800"/><path d="M4.8 2.6h6.4v6.4h-6.4z" fill="url(#gb2)" stroke="#1a7fae" stroke-width="1" stroke-linejoin="round"/><path d="M4.8 2.6l1.8 -1.8h6.4l-1.8 1.8z" fill="#d3f1fc" stroke="#1a7fae" stroke-width="1" stroke-linejoin="round"/><path d="M11.2 2.6l1.8 -1.8v6.4l-1.8 1.8z" fill="#3f9fcc" stroke="#1a7fae" stroke-width="1" stroke-linejoin="round"/></svg>
<div class="tr" id="tr0" style="left:27px;top:265.8px;color:#333">DCD1007.ASM</div>
<svg class="ico" style="left:25px;top:291.63px" width="15" height="15" viewBox="0 0 15 15"><rect x="0" y="0" width="15" height="15" fill="#e4e4e1"/><path d="M2.2 5.0h7.6v7.6h-7.6z" fill="#f1efe4" stroke="#aaa696" stroke-width="1" stroke-linejoin="round"/><path d="M2.2 5.0l2.4 -2.4h7.6l-2.4 2.4z" fill="#f7f5ec" stroke="#aaa696" stroke-width="1" stroke-linejoin="round"/><path d="M9.8 5.0l2.4 -2.4v7.6l-2.4 2.4z" fill="#cdc9b6" stroke="#aaa696" stroke-width="1" stroke-linejoin="round"/></svg>
<div class="tr" id="tr1" style="left:45px;top:291.1px;color:#b3b3b3">FRAMEWORK.PRT</div>
<svg class="ico" style="left:26px;top:317.96000000000004px" width="15" height="14" viewBox="0 0 15 14"><path d="M1.2 4.1h7.8v7.8h-7.8z" fill="url(#gb)" stroke="#1a7fae" stroke-width="1" stroke-linejoin="round"/><path d="M1.2 4.1l2.5 -2.5h7.8l-2.5 2.5z" fill="#d8f3fc" stroke="#1a7fae" stroke-width="1" stroke-linejoin="round"/><path d="M9.0 4.1l2.5 -2.5v7.8l-2.5 2.5z" fill="#4aa9d4" stroke="#1a7fae" stroke-width="1" stroke-linejoin="round"/></svg>
<div class="tr" id="tr2" style="left:45px;top:316.5px;color:#333">GEARBOX.PRT</div>
<svg class="ico" style="left:26px;top:343.29px" width="15" height="14" viewBox="0 0 15 14"><path d="M1.2 4.1h7.8v7.8h-7.8z" fill="url(#gb)" stroke="#1a7fae" stroke-width="1" stroke-linejoin="round"/><path d="M1.2 4.1l2.5 -2.5h7.8l-2.5 2.5z" fill="#d8f3fc" stroke="#1a7fae" stroke-width="1" stroke-linejoin="round"/><path d="M9.0 4.1l2.5 -2.5v7.8l-2.5 2.5z" fill="#4aa9d4" stroke="#1a7fae" stroke-width="1" stroke-linejoin="round"/></svg>
<div class="tr" id="tr3" style="left:45px;top:341.8px;color:#333">ADJUSTMENT-RING.PRT</div>
<svg class="ico" style="left:25px;top:367.62px" width="15" height="15" viewBox="0 0 15 15"><rect x="0" y="0" width="15" height="15" fill="#e4e4e1"/><path d="M2.2 5.0h7.6v7.6h-7.6z" fill="#f1efe4" stroke="#aaa696" stroke-width="1" stroke-linejoin="round"/><path d="M2.2 5.0l2.4 -2.4h7.6l-2.4 2.4z" fill="#f7f5ec" stroke="#aaa696" stroke-width="1" stroke-linejoin="round"/><path d="M9.8 5.0l2.4 -2.4v7.6l-2.4 2.4z" fill="#cdc9b6" stroke="#aaa696" stroke-width="1" stroke-linejoin="round"/></svg>
<div class="tr" id="tr4" style="left:45px;top:367.1px;color:#b3b3b3">LEFT-CASE.PRT</div>
<svg class="ico" style="left:26px;top:393.95px" width="15" height="14" viewBox="0 0 15 14"><path d="M1.2 4.1h7.8v7.8h-7.8z" fill="url(#gb)" stroke="#1a7fae" stroke-width="1" stroke-linejoin="round"/><path d="M1.2 4.1l2.5 -2.5h7.8l-2.5 2.5z" fill="#d8f3fc" stroke="#1a7fae" stroke-width="1" stroke-linejoin="round"/><path d="M9.0 4.1l2.5 -2.5v7.8l-2.5 2.5z" fill="#4aa9d4" stroke="#1a7fae" stroke-width="1" stroke-linejoin="round"/></svg>
<div class="tr" id="tr5" style="left:45px;top:392.4px;color:#333">FRONT-SHELL.PRT</div>
<svg class="ico" style="left:26px;top:419.28px" width="15" height="14" viewBox="0 0 15 14"><path d="M1.2 4.1h7.8v7.8h-7.8z" fill="url(#gb)" stroke="#1a7fae" stroke-width="1" stroke-linejoin="round"/><path d="M1.2 4.1l2.5 -2.5h7.8l-2.5 2.5z" fill="#d8f3fc" stroke="#1a7fae" stroke-width="1" stroke-linejoin="round"/><path d="M9.0 4.1l2.5 -2.5v7.8l-2.5 2.5z" fill="#4aa9d4" stroke="#1a7fae" stroke-width="1" stroke-linejoin="round"/></svg>
<div class="tr" id="tr6" style="left:45px;top:417.8px;color:#333">LEFT-HANDLE.PRT</div>
<svg class="ico" style="left:26px;top:444.61px" width="15" height="14" viewBox="0 0 15 14"><path d="M1.2 4.1h7.8v7.8h-7.8z" fill="url(#gb)" stroke="#1a7fae" stroke-width="1" stroke-linejoin="round"/><path d="M1.2 4.1l2.5 -2.5h7.8l-2.5 2.5z" fill="#d8f3fc" stroke="#1a7fae" stroke-width="1" stroke-linejoin="round"/><path d="M9.0 4.1l2.5 -2.5v7.8l-2.5 2.5z" fill="#4aa9d4" stroke="#1a7fae" stroke-width="1" stroke-linejoin="round"/></svg>
<div class="tr" id="tr7" style="left:45px;top:443.1px;color:#333">TRIGGER.PRT</div>
<svg class="ico" style="left:26px;top:469.94px" width="15" height="14" viewBox="0 0 15 14"><path d="M1.2 4.1h7.8v7.8h-7.8z" fill="url(#gb)" stroke="#1a7fae" stroke-width="1" stroke-linejoin="round"/><path d="M1.2 4.1l2.5 -2.5h7.8l-2.5 2.5z" fill="#d8f3fc" stroke="#1a7fae" stroke-width="1" stroke-linejoin="round"/><path d="M9.0 4.1l2.5 -2.5v7.8l-2.5 2.5z" fill="#4aa9d4" stroke="#1a7fae" stroke-width="1" stroke-linejoin="round"/></svg>
<div class="tr" id="tr8" style="left:45px;top:468.4px;color:#333">DIRECTIONAL-KNOB.PRT</div>
<svg class="ico" style="left:26px;top:495.27px" width="15" height="14" viewBox="0 0 15 14"><path d="M1.2 4.1h7.8v7.8h-7.8z" fill="url(#gb)" stroke="#1a7fae" stroke-width="1" stroke-linejoin="round"/><path d="M1.2 4.1l2.5 -2.5h7.8l-2.5 2.5z" fill="#d8f3fc" stroke="#1a7fae" stroke-width="1" stroke-linejoin="round"/><path d="M9.0 4.1l2.5 -2.5v7.8l-2.5 2.5z" fill="#4aa9d4" stroke="#1a7fae" stroke-width="1" stroke-linejoin="round"/></svg>
<div class="tr" id="tr9" style="left:45px;top:493.8px;color:#333">RIGHT-HANDLE.PRT</div>
<svg class="ico" style="left:26px;top:519.6px" width="15" height="15" viewBox="0 0 15 15"><path d="M1.5 3.5l2-2h9v9.500l-2 2h-9z" fill="#f1d189" stroke="#c9a04e" stroke-width="0.800"/><path d="M1.500 3.500h9v9.500h-9z" fill="#fbe7b6" stroke="#c9a04e" stroke-width="0.800"/><path d="M4.8 2.6h6.4v6.4h-6.4z" fill="url(#gb2)" stroke="#1a7fae" stroke-width="1" stroke-linejoin="round"/><path d="M4.8 2.6l1.8 -1.8h6.4l-1.8 1.8z" fill="#d3f1fc" stroke="#1a7fae" stroke-width="1" stroke-linejoin="round"/><path d="M11.2 2.6l1.8 -1.8v6.4l-1.8 1.8z" fill="#3f9fcc" stroke="#1a7fae" stroke-width="1" stroke-linejoin="round"/></svg>
<div class="tr" id="tr10" style="left:45px;top:519.1px;color:#333">DRILL-CHUCK.ASM</div>
<svg class="ico" style="left:12px;top:522.6px" width="8" height="10" viewBox="0 0 8 10"><path d="M1.500 1l5 4-5 4z" fill="#7a7a7a"/></svg>
<svg class="ico" style="left:26px;top:544.9300000000001px" width="15" height="15" viewBox="0 0 15 15"><path d="M1.5 3.5l2-2h9v9.500l-2 2h-9z" fill="#f1d189" stroke="#c9a04e" stroke-width="0.800"/><path d="M1.500 3.500h9v9.500h-9z" fill="#fbe7b6" stroke="#c9a04e" stroke-width="0.800"/><path d="M4.8 2.6h6.4v6.4h-6.4z" fill="url(#gb2)" stroke="#1a7fae" stroke-width="1" stroke-linejoin="round"/><path d="M4.8 2.6l1.8 -1.8h6.4l-1.8 1.8z" fill="#d3f1fc" stroke="#1a7fae" stroke-width="1" stroke-linejoin="round"/><path d="M11.2 2.6l1.8 -1.8v6.4l-1.8 1.8z" fill="#3f9fcc" stroke="#1a7fae" stroke-width="1" stroke-linejoin="round"/></svg>
<div class="tr" id="tr11" style="left:45px;top:544.4px;color:#333">LIGHT-ASM.ASM</div>
<svg class="ico" style="left:11px;top:548.9300000000001px" width="10" height="8" viewBox="0 0 10 8"><path d="M1 1.500h8l-4 5z" fill="#666"/></svg>
<svg class="ico" style="left:44px;top:571.26px" width="15" height="14" viewBox="0 0 15 14"><path d="M1.2 4.1h7.8v7.8h-7.8z" fill="url(#gb)" stroke="#1a7fae" stroke-width="1" stroke-linejoin="round"/><path d="M1.2 4.1l2.5 -2.5h7.8l-2.5 2.5z" fill="#d8f3fc" stroke="#1a7fae" stroke-width="1" stroke-linejoin="round"/><path d="M9.0 4.1l2.5 -2.5v7.8l-2.5 2.5z" fill="#4aa9d4" stroke="#1a7fae" stroke-width="1" stroke-linejoin="round"/></svg>
<div class="tr" id="tr12" style="left:63px;top:569.8px;color:#333">LIGHT.PRT</div>
<svg class="ico" style="left:44px;top:596.5899999999999px" width="15" height="14" viewBox="0 0 15 14"><path d="M1.2 4.1h7.8v7.8h-7.8z" fill="url(#gb)" stroke="#1a7fae" stroke-width="1" stroke-linejoin="round"/><path d="M1.2 4.1l2.5 -2.5h7.8l-2.5 2.5z" fill="#d8f3fc" stroke="#1a7fae" stroke-width="1" stroke-linejoin="round"/><path d="M9.0 4.1l2.5 -2.5v7.8l-2.5 2.5z" fill="#4aa9d4" stroke="#1a7fae" stroke-width="1" stroke-linejoin="round"/></svg>
<div class="tr" id="tr13" style="left:63px;top:595.1px;color:#333">LENS.PRT</div>
<svg class="ico" style="left:26px;top:621.9200000000001px" width="15" height="14" viewBox="0 0 15 14"><path d="M1.2 4.1h7.8v7.8h-7.8z" fill="url(#gb)" stroke="#1a7fae" stroke-width="1" stroke-linejoin="round"/><path d="M1.2 4.1l2.5 -2.5h7.8l-2.5 2.5z" fill="#d8f3fc" stroke="#1a7fae" stroke-width="1" stroke-linejoin="round"/><path d="M9.0 4.1l2.5 -2.5v7.8l-2.5 2.5z" fill="#4aa9d4" stroke="#1a7fae" stroke-width="1" stroke-linejoin="round"/></svg>
<div class="tr" id="tr14" style="left:45px;top:620.4px;color:#333">GEAR.PRT</div>
</body></html>
